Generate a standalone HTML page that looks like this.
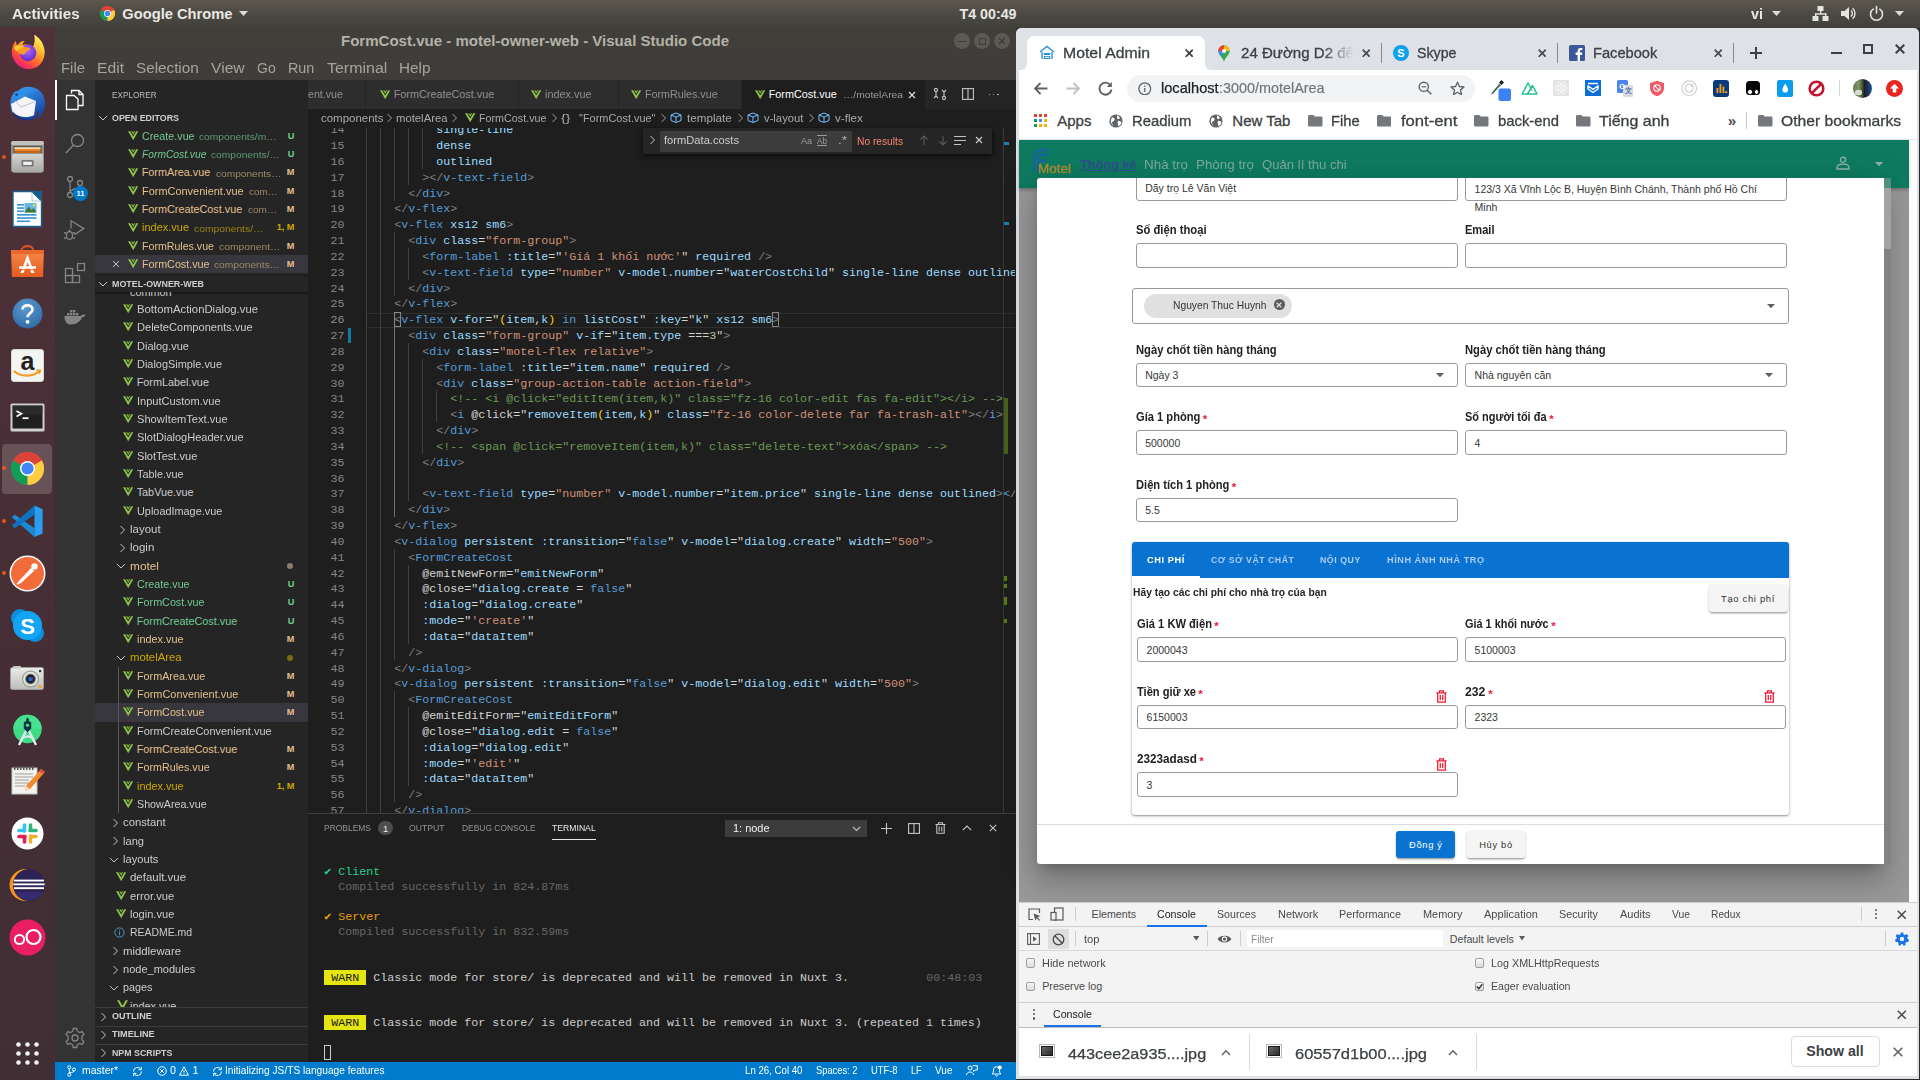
<!DOCTYPE html>
<html><head><meta charset="utf-8"><title>Desktop</title>
<style>
html,body{margin:0;padding:0;}
body{width:1920px;height:1080px;overflow:hidden;position:relative;background:#2c2b28;font-family:"Liberation Sans",sans-serif;}
div,span,svg{position:absolute;box-sizing:border-box;}
span{display:block;}
.clip{overflow:hidden;}
</style></head><body>
<div style="left:0px;top:0px;width:1920px;height:27.5px;background:linear-gradient(#5c584f,#4f4c45 40%,#403f3a 100%);"></div>
<span style="top:3.70px;height:21px;line-height:21px;font-size:14.7px;color:#e8e8e4;font-family:'Liberation Sans',sans-serif;white-space:pre;font-weight:700;left:12.30px;transform:scaleX(1.0366);transform-origin:left center;">Activities</span>
<svg style="left:100.0px;top:6.0px;" width="15.0" height="15.0" viewBox="0 0 15.0 15.0"><circle cx="7.5" cy="7.5" r="7.5" fill="#db4437"/>
<path d="M7.5,7.5 L1.00,3.75 A7.5,7.5 0 0,0 7.58,15.0 Z" fill="#0f9d58"/>
<path d="M7.5,7.5 L7.50,15.0 A7.5,7.5 0 0,0 14.00,3.75 Z" fill="#ffcd40"/>
<path d="M7.5,7.5 L14.00,3.75 A7.5,7.5 0 0,0 1.00,3.75 Z" fill="#db4437"/>
<circle cx="7.5" cy="7.5" r="3.45" fill="#fff"/>
<circle cx="7.5" cy="7.5" r="2.77" fill="#4285f4"/></svg>
<span style="top:3.70px;height:21px;line-height:21px;font-size:14.7px;color:#e8e8e4;font-family:'Liberation Sans',sans-serif;white-space:pre;font-weight:700;left:122.30px;">Google Chrome</span>
<svg style="left:239px;top:11px;" width="9" height="6" viewBox="0 0 9 6"><path d="M0,0 L9,0 L4.5,5 Z" fill="#dcdcd6"/></svg>
<span style="top:3.70px;height:21px;line-height:21px;font-size:14.7px;color:#e8e8e4;font-family:'Liberation Sans',sans-serif;white-space:pre;font-weight:700;left:987.50px;transform:translateX(-50%) scaleX(0.9694);">T4 00:49</span>
<span style="top:3.70px;height:21px;line-height:21px;font-size:14.7px;color:#e8e8e4;font-family:'Liberation Sans',sans-serif;white-space:pre;font-weight:700;left:1750.80px;transform:scaleX(0.9796);transform-origin:left center;">vi</span>
<svg style="left:1772px;top:11px;" width="9" height="6" viewBox="0 0 9 6"><path d="M0,0 L9,0 L4.5,5 Z" fill="#dcdcd6"/></svg>
<svg style="left:1812px;top:5px;" width="17" height="17" viewBox="0 0 17 17"><g fill="#e4e4de"><rect x="5.5" y="1" width="6" height="5"/><rect x="0.5" y="11" width="6" height="5"/><rect x="10.5" y="11" width="6" height="5"/><rect x="8" y="6" width="1.4" height="3"/><rect x="3" y="8.3" width="11.4" height="1.4"/><rect x="3" y="8.3" width="1.4" height="3"/><rect x="13" y="8.3" width="1.4" height="3"/></g></svg>
<svg style="left:1840px;top:5px;" width="17" height="17" viewBox="0 0 17 17"><g fill="#e4e4de"><path d="M1,6 H4.5 L9,2 V15 L4.5,11 H1 Z"/></g><g fill="none" stroke="#e4e4de" stroke-width="1.4"><path d="M11,5.5 A4,4 0 0,1 11,11.5"/><path d="M12.6,3.2 A7,7 0 0,1 12.6,13.8"/></g></svg>
<svg style="left:1868px;top:5px;" width="17" height="17" viewBox="0 0 17 17"><g fill="none" stroke="#e4e4de" stroke-width="1.6" stroke-linecap="round"><path d="M5.2,4.2 A6,6 0 1,0 11.8,4.2"/><path d="M8.5,1.5 V8"/></g></svg>
<svg style="left:1895px;top:11px;" width="9" height="6" viewBox="0 0 9 6"><path d="M0,0 L9,0 L4.5,5 Z" fill="#dcdcd6"/></svg>
<div style="left:0px;top:27px;width:55px;height:1053px;background:linear-gradient(#4f3139,#452e35 60%,#3f2f34);"></div>
<div style="left:2px;top:444px;width:50px;height:50px;background:rgba(255,255,255,0.17);border-radius:4px;"></div>
<div style="left:2px;top:155px;width:4px;height:4px;background:#e95420;border-radius:50%;"></div>
<div style="left:2px;top:466px;width:4px;height:4px;background:#e95420;border-radius:50%;"></div>
<div style="left:2px;top:519px;width:4px;height:4px;background:#e95420;border-radius:50%;"></div>
<div style="left:2px;top:571px;width:4px;height:4px;background:#e95420;border-radius:50%;"></div>
<svg style="left:9px;top:33px;" width="37" height="38" viewBox="0 0 37 38"><defs><linearGradient id="ff1" x1="0.8" y1="0.05" x2="0.2" y2="0.95"><stop offset="0" stop-color="#fff36b"/><stop offset="0.3" stop-color="#ffbd2e"/><stop offset="0.6" stop-color="#ff6a2a"/><stop offset="0.85" stop-color="#f9335a"/><stop offset="1" stop-color="#e3198c"/></linearGradient>
<radialGradient id="ff2" cx="0.45" cy="0.35" r="0.7"><stop offset="0" stop-color="#b06bff"/><stop offset="1" stop-color="#5b25c8"/></radialGradient></defs>
<path d="M25,1.5 C30,5 33,8 34.5,13 C36.5,18 36,24 33,29 C29,35.5 20,38 12.5,34.5 C4.5,30.5 1,21 3.5,13.5 C4.5,10.5 6,8.5 7,8 C7,10 7.5,11.5 8.5,12.5 C10,9 13,7.5 16,8 C14,9.5 13.5,11 14,12 C18,11 22,12 24,14 C25.5,10 26.5,6 25,1.5Z" fill="url(#ff1)"/>
<circle cx="19" cy="20" r="8.3" fill="url(#ff2)"/>
<path d="M5,14 C8,11.5 12,12 15,14 C18.5,14 21,15 21.5,16.5 C19,17 17,18.5 16,21 C13,22 9.5,21 8,18 C6.5,17.5 5.3,16 5,14Z" fill="#ff9b22"/>
<path d="M5,14 C8,11.5 12,12 15,14 C12,14.5 10,16 8,18 C6.5,17.5 5.3,16 5,14Z" fill="#ffc93a"/></svg>
<svg style="left:8px;top:85px;" width="39" height="39" viewBox="0 0 39 39"><defs><linearGradient id="tb1" x1="0.2" y1="0" x2="0.8" y2="1"><stop offset="0" stop-color="#3aa0f5"/><stop offset="1" stop-color="#123c9a"/></linearGradient></defs>
<path d="M10,6 C17,-1 30,1 35,10 C39,18 37,29 29,34 C31,30 31,27 30,25 L27,33 C22,37 12,36 6,30 C2,25 1,17 4,11 C5,8 7,6 10,6Z" fill="url(#tb1)"/>
<path d="M9,7 C14,2 22,2 27,6 C22,6 18,8 16,12 L9,15 C7,12 7,9 9,7Z" fill="#2f8fe8"/>
<path d="M6.5,9.5 L10,8.3 L9.2,11Z" fill="#0d2b6b"/>
<path d="M3,19 L17,11.5 L28,16 L26,30 C20,33.5 10,32.5 4.5,27 Z" fill="#f5f5f9"/>
<path d="M7,15.5 L13,22 L27,16.5" fill="none" stroke="#b9bccb" stroke-width="0.9"/>
<path d="M5,29 C9,35 20,37 27,33 C21,35 10,33 5,27Z" fill="#1b2f7a"/></svg>
<svg style="left:10px;top:140px;" width="35" height="34" viewBox="0 0 35 34"><defs><linearGradient id="fl1" x1="0" y1="0" x2="0" y2="1"><stop offset="0" stop-color="#d4d4d0"/><stop offset="1" stop-color="#a6a6a2"/></linearGradient></defs>
<rect x="1" y="1" width="33" height="31.5" rx="3" fill="#8f8f8b"/>
<rect x="1" y="1" width="33" height="4" rx="2" fill="#c2c2be"/>
<rect x="3.5" y="6" width="28" height="8" fill="#55524e"/>
<rect x="4.5" y="7.2" width="26" height="2" fill="#f4dcb4"/><rect x="4.5" y="9" width="26" height="2.4" fill="#f08226"/><rect x="4.5" y="11.4" width="26" height="1.6" fill="#c96414"/>
<rect x="2" y="13.5" width="31" height="19" rx="2" fill="url(#fl1)"/>
<rect x="11.5" y="20" width="12" height="6.5" rx="1.2" fill="#77777a"/><rect x="13.2" y="21.7" width="8.6" height="3.2" fill="#f2f2f0"/></svg>
<svg style="left:12px;top:190px;" width="31" height="38" viewBox="0 0 31 38"><path d="M1,1.5 H20 L29.5,11 V36.5 H1 Z" fill="#ffffff" stroke="#1c5f8f" stroke-width="1.4"/>
<path d="M20,1 H30 V11 Z" fill="#155d8e"/><path d="M20,1.5 V11 H29.5" fill="none" stroke="#8fb9d6" stroke-width="0.8"/>
<rect x="5" y="14" width="7" height="1.7" fill="#3a9ad9"/><rect x="5" y="17.2" width="7" height="1.7" fill="#3a9ad9"/><rect x="5" y="20.4" width="7" height="1.7" fill="#3a9ad9"/>
<rect x="12.5" y="13" width="12" height="9.5" fill="#6ab6e6"/><path d="M12.5,22.5 L16.5,16.5 L19.5,20 L21.5,18 L24.5,22.5Z" fill="#3c7a3a"/><circle cx="22" cy="15.3" r="1.2" fill="#f6d84a"/>
<rect x="5" y="24" width="19.5" height="1.7" fill="#3a9ad9"/><rect x="5" y="27.2" width="19.5" height="1.7" fill="#3a9ad9"/><rect x="5" y="30.4" width="13" height="1.7" fill="#3a9ad9"/></svg>
<svg style="left:10px;top:243px;" width="35" height="35" viewBox="0 0 35 35"><defs><linearGradient id="sw1" x1="0" y1="0" x2="0" y2="1"><stop offset="0" stop-color="#f58a4a"/><stop offset="1" stop-color="#e65c1e"/></linearGradient></defs>
<path d="M11.5,8 C11.5,1.5 23.5,1.5 23.5,8" fill="none" stroke="#d4541c" stroke-width="2.2"/>
<path d="M1,7 H34 L33,34 H2 Z" fill="url(#sw1)"/><path d="M1,7 H34 L33.8,11 H1.2 Z" fill="#e9692c"/>
<path d="M10.5,30 L17.5,11.5 L24.5,30 H21.3 L17.5,19 L13.7,30 Z" fill="#fff"/><rect x="9" y="23.3" width="17" height="2.4" fill="#fff"/><rect x="9" y="26.2" width="17" height="1" fill="#e9692c"/></svg>
<svg style="left:12px;top:298px;" width="31" height="31" viewBox="0 0 31 31"><defs><radialGradient id="hp" cx="0.45" cy="0.3" r="0.8"><stop offset="0" stop-color="#5b9ad2"/><stop offset="1" stop-color="#2c66a0"/></radialGradient></defs>
<circle cx="15.5" cy="15.5" r="15" fill="url(#hp)"/>
<path d="M10.5,11.5 C10.5,6 20.5,6 20.5,11.5 C20.5,15 15.6,15 15.6,19.2" fill="none" stroke="#fff" stroke-width="2.6"/><circle cx="15.6" cy="23.8" r="1.9" fill="#fff"/></svg>
<svg style="left:11px;top:349px;" width="33" height="33" viewBox="0 0 33 33"><rect x="0.5" y="0.5" width="32" height="32" rx="2.5" fill="#f4f4f2" stroke="#d6d6d2"/>
<text x="16.5" y="20.5" font-family="Liberation Sans" font-weight="700" font-size="25" fill="#222" text-anchor="middle">a</text>
<path d="M3.5,22.5 C11,28.5 22,27.5 28,22.5" fill="none" stroke="#f59a1c" stroke-width="2.2" stroke-linecap="round"/><path d="M25.5,21 L29.5,21.3 L28.3,25" fill="none" stroke="#f59a1c" stroke-width="1.4"/></svg>
<svg style="left:10px;top:403px;" width="35" height="29" viewBox="0 0 35 29"><rect x="0.5" y="0.5" width="34" height="28" rx="1.5" fill="#cfcfcb"/><rect x="2.5" y="2.5" width="30" height="23" fill="#1f1f1f"/><rect x="2.5" y="2.5" width="30" height="9" fill="#333" opacity="0.6"/>
<path d="M6.5,8 L11.5,10.8 L6.5,13.6" fill="none" stroke="#fff" stroke-width="1.7"/><rect x="12.5" y="14.3" width="6" height="1.8" fill="#fff"/></svg>
<svg style="left:10.5px;top:452.0px;" width="33.0" height="33.0" viewBox="0 0 33.0 33.0"><circle cx="16.5" cy="16.5" r="16.5" fill="#db4437"/>
<path d="M16.5,16.5 L2.21,8.25 A16.5,16.5 0 0,0 16.66,33.0 Z" fill="#0f9d58"/>
<path d="M16.5,16.5 L16.50,33.0 A16.5,16.5 0 0,0 30.79,8.25 Z" fill="#ffcd40"/>
<path d="M16.5,16.5 L30.79,8.25 A16.5,16.5 0 0,0 2.21,8.25 Z" fill="#db4437"/>
<circle cx="16.5" cy="16.5" r="7.59" fill="#fff"/>
<circle cx="16.5" cy="16.5" r="6.10" fill="#4285f4"/></svg>
<svg style="left:11px;top:504.5px;" width="33" height="33" viewBox="0 0 33 33"><path d="M23.5,32 L3.2,14.2 L0.8,12.2 L3.6,9.6 L23.5,23.2 Z" fill="#1b8ad6"/>
<path d="M23.5,0.5 L3.2,18.6 L0.8,20.6 L3.6,23.2 L23.5,9.4 Z" fill="#0d74c4"/>
<path d="M23.5,0.5 L31.6,4.2 V28.6 L23.5,32 Z" fill="#2a9df0"/></svg>
<svg style="left:9px;top:555px;" width="37" height="37" viewBox="0 0 37 37"><circle cx="18.5" cy="18.5" r="18" fill="#fff"/><circle cx="18.5" cy="18.5" r="16.5" fill="#f26b3a"/>
<path d="M9,27 L22,13 L25,16 L12,28 Z" fill="#fff"/><circle cx="25.5" cy="11.5" r="3.2" fill="#fff"/><path d="M8,29 L12,27" stroke="#fff" stroke-width="1.5"/></svg>
<svg style="left:10px;top:608px;" width="35" height="35" viewBox="0 0 35 35"><circle cx="10" cy="10" r="9" fill="#0a8fe0"/><circle cx="25" cy="25" r="9" fill="#0a8fe0"/><circle cx="17.5" cy="17.5" r="14.5" fill="#12a5f4"/>
<text x="17.5" y="25.5" font-family="Liberation Sans" font-weight="700" font-size="22" fill="#fff" text-anchor="middle">S</text></svg>
<svg style="left:10px;top:665px;" width="35" height="26" viewBox="0 0 35 26"><defs><linearGradient id="cm1" x1="0" y1="0" x2="0" y2="1"><stop offset="0" stop-color="#ebebe7"/><stop offset="1" stop-color="#bdbdb9"/></linearGradient></defs>
<rect x="0.5" y="2.5" width="33" height="22" rx="2" fill="url(#cm1)" stroke="#a3a39f" stroke-width="0.8"/>
<rect x="3" y="1" width="8" height="2.5" rx="1" fill="#c9c9c5"/><rect x="29" y="5" width="2.2" height="2.2" fill="#333"/>
<circle cx="20.5" cy="14" r="8.6" fill="#9d9d99"/><circle cx="20.5" cy="14" r="7.3" fill="#e9e9e5"/><circle cx="20.5" cy="14" r="5.6" fill="#8b8b87"/><circle cx="20.5" cy="14" r="4.4" fill="#1d1d22"/><rect x="18.3" y="12.3" width="4.6" height="3.6" rx="1" fill="#2a5bd0"/><rect x="28.6" y="20" width="2.8" height="2.8" fill="#f0a21c"/></svg>
<svg style="left:12px;top:714px;" width="31" height="33" viewBox="0 0 31 33"><circle cx="15.5" cy="15" r="14.2" fill="#3ddc84"/><path d="M1.3,15 A14.2,14.2 0 0,1 29.7,15 Z" fill="#46e08e"/>
<path d="M15.5,14 L7,31 M15.5,14 L24,31 M9.5,25 C13,21.5 18,21.5 21.5,25" fill="none" stroke="#dfeaf2" stroke-width="2.4"/>
<path d="M15.5,3.5 L16.8,5 V7 L19.2,8.5 V14.5 L15.5,18.5 L11.8,14.5 V8.5 L14.2,7 V5 Z" fill="#0b3246"/><circle cx="15.5" cy="11.3" r="1.7" fill="#3ddc84"/></svg>
<svg style="left:11px;top:765px;" width="35" height="31" viewBox="0 0 35 31"><rect x="1" y="3" width="25" height="26" fill="#f2f2ee" stroke="#c4c4c0"/>
<g stroke="#8a8a86" stroke-width="0.8"><path d="M4,9H22M4,12H22M4,15H18M4,18H22M4,21H14"/></g>
<g fill="#555"><rect x="3" y="1" width="1.5" height="4"/><rect x="6" y="1" width="1.5" height="4"/><rect x="9" y="1" width="1.5" height="4"/><rect x="12" y="1" width="1.5" height="4"/><rect x="15" y="1" width="1.5" height="4"/><rect x="18" y="1" width="1.5" height="4"/><rect x="21" y="1" width="1.5" height="4"/></g>
<path d="M15,21 L30,4 L34,7 L19,24 L14,26 Z" fill="#f08a2c"/><path d="M30,4 L34,7 L32,9 L28,6Z" fill="#e04848"/><path d="M15,21 L19,24 L14,26Z" fill="#f6dcb0"/></svg>
<svg style="left:11px;top:817px;" width="33" height="33" viewBox="0 0 33 33"><circle cx="16.5" cy="16.5" r="16" fill="#fff"/>
<g stroke-width="3.6" stroke-linecap="round"><path d="M13.5,8 V14" stroke="#36c5f0"/><path d="M8,13.5 H13" stroke="#36c5f0"/>
<path d="M25,13.5 H19" stroke="#2eb67d"/><path d="M19.5,8 V13" stroke="#2eb67d"/>
<path d="M19.5,25 V19" stroke="#ecb22e"/><path d="M25,19.5 H20" stroke="#ecb22e"/>
<path d="M8,19.5 H14" stroke="#e01e5a"/><path d="M13.5,25 V20" stroke="#e01e5a"/></g></svg>
<svg style="left:8.5px;top:868px;" width="37" height="34" viewBox="0 0 37 34"><circle cx="16.5" cy="17" r="16" fill="#f7941e"/><circle cx="20" cy="17" r="16" fill="#2c2255"/><path d="M6,24 A16,16 0 0,0 34,24 Z" fill="#3a2f7a" opacity="0.7"/>
<rect x="5" y="11.6" width="30" height="1.9" fill="#fff"/><rect x="4.3" y="15.4" width="31.4" height="1.9" fill="#fff"/><rect x="5" y="19.2" width="30" height="1.9" fill="#fff"/></svg>
<svg style="left:9px;top:919px;" width="37" height="37" viewBox="0 0 37 37"><circle cx="18.5" cy="18.5" r="18" fill="#e91e63"/>
<circle cx="10.5" cy="20.5" r="4.6" fill="none" stroke="#fff" stroke-width="2"/><circle cx="24.5" cy="18" r="7" fill="none" stroke="#fff" stroke-width="2.2"/></svg>
<svg style="left:15.5px;top:1041.5px;" width="23" height="23" viewBox="0 0 23 23"><circle cx="2.5" cy="2.5" r="2.3" fill="#f2f2f0"/><circle cx="11.5" cy="2.5" r="2.3" fill="#f2f2f0"/><circle cx="20.5" cy="2.5" r="2.3" fill="#f2f2f0"/><circle cx="2.5" cy="11.5" r="2.3" fill="#f2f2f0"/><circle cx="11.5" cy="11.5" r="2.3" fill="#f2f2f0"/><circle cx="20.5" cy="11.5" r="2.3" fill="#f2f2f0"/><circle cx="2.5" cy="20.5" r="2.3" fill="#f2f2f0"/><circle cx="11.5" cy="20.5" r="2.3" fill="#f2f2f0"/><circle cx="20.5" cy="20.5" r="2.3" fill="#f2f2f0"/></svg>
<div style="left:55px;top:27px;width:960.5px;height:53px;background:linear-gradient(#403f3a,#3e3d39);"></div>
<span style="top:30.50px;height:21px;line-height:21px;font-size:14.7px;color:#b4b2a8;font-family:'Liberation Sans',sans-serif;white-space:pre;font-weight:700;left:534.50px;transform:translateX(-50%) scaleX(1.0232);">FormCost.vue - motel-owner-web - Visual Studio Code</span>
<div style="left:954px;top:33px;width:16px;height:16px;background:#5a5954;border-radius:50%;"></div>
<div style="left:958px;top:40.5px;width:8px;height:1.2px;background:#3c3b37;"></div>
<div style="left:974px;top:33px;width:16px;height:16px;background:#5a5954;border-radius:50%;"></div>
<div style="left:978.5px;top:37.5px;width:7px;height:7px;border:1.2px solid #3c3b37;"></div>
<div style="left:994px;top:33px;width:16px;height:16px;background:#5a5954;border-radius:50%;"></div>
<svg style="left:998px;top:37px;" width="8" height="8" viewBox="0 0 8 8"><path d="M1,1 L7,7 M7,1 L1,7" stroke="#3c3b37" stroke-width="1.3"/></svg>
<span style="top:57.50px;height:21px;line-height:21px;font-size:14.7px;color:#a5a49c;font-family:'Liberation Sans',sans-serif;white-space:pre;left:61.00px;transform:scaleX(1.0139);transform-origin:left center;">File</span>
<span style="top:57.50px;height:21px;line-height:21px;font-size:14.7px;color:#a5a49c;font-family:'Liberation Sans',sans-serif;white-space:pre;left:97.00px;transform:scaleX(1.0667);transform-origin:left center;">Edit</span>
<span style="top:57.50px;height:21px;line-height:21px;font-size:14.7px;color:#a5a49c;font-family:'Liberation Sans',sans-serif;white-space:pre;left:136.00px;transform:scaleX(1.0377);transform-origin:left center;">Selection</span>
<span style="top:57.50px;height:21px;line-height:21px;font-size:14.7px;color:#a5a49c;font-family:'Liberation Sans',sans-serif;white-space:pre;left:211.00px;transform:scaleX(1.0672);transform-origin:left center;">View</span>
<span style="top:57.50px;height:21px;line-height:21px;font-size:14.7px;color:#a5a49c;font-family:'Liberation Sans',sans-serif;white-space:pre;left:257.00px;transform:scaleX(0.9544);transform-origin:left center;">Go</span>
<span style="top:57.50px;height:21px;line-height:21px;font-size:14.7px;color:#a5a49c;font-family:'Liberation Sans',sans-serif;white-space:pre;left:288.00px;transform:scaleX(0.9758);transform-origin:left center;">Run</span>
<span style="top:57.50px;height:21px;line-height:21px;font-size:14.7px;color:#a5a49c;font-family:'Liberation Sans',sans-serif;white-space:pre;left:327.00px;transform:scaleX(1.0865);transform-origin:left center;">Terminal</span>
<span style="top:57.50px;height:21px;line-height:21px;font-size:14.7px;color:#a5a49c;font-family:'Liberation Sans',sans-serif;white-space:pre;left:399.30px;transform:scaleX(1.0391);transform-origin:left center;">Help</span>
<div style="left:55px;top:80px;width:40px;height:982px;background:#333333;"></div>
<div style="left:55px;top:80px;width:1.7px;height:40px;background:#ffffff;"></div>
<svg style="left:65px;top:89px;" width="20" height="22" viewBox="0 0 20 22"><g fill="none" stroke="#fff" stroke-width="1.3"><path d="M6.5,4.5 V1.5 H14 L18,5.5 V16.5 H13"/><path d="M14,1.5 V5.5 H18"/><path d="M1.5,6.5 H9 L13,10 V20.5 H1.5 Z"/></g></svg>
<svg style="left:64px;top:132px;" width="22" height="22" viewBox="0 0 22 22"><g fill="none" stroke="#858585" stroke-width="1.3"><circle cx="13.5" cy="8.5" r="6"/><path d="M9.5,13 L2,21"/></g></svg>
<svg style="left:65px;top:175px;" width="22" height="24" viewBox="0 0 22 24"><g fill="none" stroke="#858585" stroke-width="1.3"><circle cx="5" cy="4" r="2.5"/><circle cx="5" cy="20" r="2.5"/><circle cx="15" cy="8" r="2.5"/><path d="M5,6.5 V17.5"/><path d="M15,10.5 C15,15 5,13 5,17.5"/></g></svg>
<div style="left:73px;top:185.8px;width:15px;height:15px;background:#007acc;border-radius:50%;"></div>
<span style="top:188.00px;height:11px;line-height:11px;font-size:7.7px;color:#fff;font-family:'Liberation Sans',sans-serif;white-space:pre;font-weight:700;left:80.50px;transform:translateX(-50%);">11</span>
<svg style="left:63px;top:218px;" width="24" height="24" viewBox="0 0 24 24"><g fill="none" stroke="#858585" stroke-width="1.3"><path d="M8,10.5 V2.8 L20.8,10.6 L11.5,16.6"/><ellipse cx="6.5" cy="17.5" rx="3" ry="4"/><path d="M1,15H3.5M1,20H3.5M9.5,15H12M9.5,20H12M6.5,13.5V11.5"/></g></svg>
<svg style="left:64px;top:262px;" width="22" height="22" viewBox="0 0 22 22"><g fill="none" stroke="#858585" stroke-width="1.3"><rect x="1.5" y="6.5" width="7" height="7"/><rect x="1.5" y="13.5" width="7" height="7"/><rect x="8.5" y="13.5" width="7" height="7"/><rect x="13.5" y="1.5" width="7" height="7"/></g></svg>
<svg style="left:64px;top:309px;" width="22" height="16" viewBox="0 0 22 16"><g fill="#858585"><path d="M0.5,7 H17 C17.5,5.5 19,5 21.5,5.8 C21,7.5 19.5,8.3 18,8.3 C16.5,13 12,15.5 7,15.5 C3,15.5 0.5,13 0.5,7Z"/><rect x="3" y="4" width="2.4" height="2.4"/><rect x="6" y="4" width="2.4" height="2.4"/><rect x="9" y="4" width="2.4" height="2.4"/><rect x="6" y="1" width="2.4" height="2.4"/><rect x="9" y="1" width="2.4" height="2.4"/><rect x="12" y="4" width="2.4" height="2.4"/></g></svg>
<svg style="left:64px;top:1027px;" width="22" height="22" viewBox="0 0 22 22"><g fill="none" stroke="#858585" stroke-width="1.3"><circle cx="11" cy="11" r="3"/><path d="M9.3,1.5 H12.7 L13.3,4.2 L15.6,5.5 L18.2,4.6 L19.9,7.5 L17.9,9.4 V12.6 L19.9,14.5 L18.2,17.4 L15.6,16.5 L13.3,17.8 L12.7,20.5 H9.3 L8.7,17.8 L6.4,16.5 L3.8,17.4 L2.1,14.5 L4.1,12.6 V9.4 L2.1,7.5 L3.8,4.6 L6.4,5.5 L8.7,4.2 Z"/></g></svg>
<div style="left:95px;top:80px;width:213px;height:982px;background:#252526;"></div>
<span style="top:88.50px;height:13px;line-height:13px;font-size:9.2px;color:#bbbbbb;font-family:'Liberation Sans',sans-serif;white-space:pre;left:111.70px;transform:scaleX(0.8912);transform-origin:left center;">EXPLORER</span>
<svg style="left:98px;top:112.7px;" width="10" height="10" viewBox="0 0 10 10"><path d="M1,3 L5,7 L9,3" fill="none" stroke="#c5c5c5" stroke-width="1"/></svg>
<span style="top:112.10px;height:13px;line-height:13px;font-size:9.2px;color:#cfcfcf;font-family:'Liberation Sans',sans-serif;white-space:pre;font-weight:700;left:111.70px;transform:scaleX(0.9673);transform-origin:left center;">OPEN EDITORS</span>
<svg style="left:127.5px;top:130.92px;" width="10.4" height="9.36" viewBox="0 0 12 10.4"><path d="M0,0 H2.6 L6,5.9 L9.4,0 H12 L6,10.4 Z" fill="#8dc149"/><path d="M3.6,0 H5 L6,1.8 L7,0 H8.4 L6,4.3Z" fill="#8dc149"/><path d="M2.6,0 H3.6 L6,4.3 L8.4,0 H9.4 L6,5.9Z" fill="#1e1e1e" opacity="0.55"/></svg>
<span style="top:128.50px;height:15px;line-height:15px;font-size:10.83px;color:#73c991;font-family:'Liberation Sans',sans-serif;white-space:pre;left:141.70px;transform:scaleX(0.9930);transform-origin:left center;">Create.vue</span>
<span style="top:130.10px;height:13px;line-height:13px;font-size:9.6px;color:#5d9a72;font-family:'Liberation Sans',sans-serif;white-space:pre;left:199.30px;transform:scaleX(1.0674);transform-origin:left center;">components/m…</span>
<span style="top:129.50px;height:13px;line-height:13px;font-size:9.2px;color:#73c991;font-family:'Liberation Sans',sans-serif;white-space:pre;font-weight:700;right:1625.50px;">U</span>
<svg style="left:127.5px;top:149.25px;" width="10.4" height="9.36" viewBox="0 0 12 10.4"><path d="M0,0 H2.6 L6,5.9 L9.4,0 H12 L6,10.4 Z" fill="#8dc149"/><path d="M3.6,0 H5 L6,1.8 L7,0 H8.4 L6,4.3Z" fill="#8dc149"/><path d="M2.6,0 H3.6 L6,4.3 L8.4,0 H9.4 L6,5.9Z" fill="#1e1e1e" opacity="0.55"/></svg>
<span style="top:146.83px;height:15px;line-height:15px;font-size:10.83px;color:#73c991;font-family:'Liberation Sans',sans-serif;white-space:pre;font-style:italic;left:141.70px;transform:scaleX(0.9471);transform-origin:left center;">FormCost.vue</span>
<span style="top:148.43px;height:13px;line-height:13px;font-size:9.6px;color:#5d9a72;font-family:'Liberation Sans',sans-serif;white-space:pre;left:211.30px;transform:scaleX(1.0646);transform-origin:left center;">components/…</span>
<span style="top:147.83px;height:13px;line-height:13px;font-size:9.2px;color:#73c991;font-family:'Liberation Sans',sans-serif;white-space:pre;font-weight:700;right:1625.50px;">U</span>
<svg style="left:127.5px;top:167.59px;" width="10.4" height="9.36" viewBox="0 0 12 10.4"><path d="M0,0 H2.6 L6,5.9 L9.4,0 H12 L6,10.4 Z" fill="#8dc149"/><path d="M3.6,0 H5 L6,1.8 L7,0 H8.4 L6,4.3Z" fill="#8dc149"/><path d="M2.6,0 H3.6 L6,4.3 L8.4,0 H9.4 L6,5.9Z" fill="#1e1e1e" opacity="0.55"/></svg>
<span style="top:165.17px;height:15px;line-height:15px;font-size:10.83px;color:#e2c08d;font-family:'Liberation Sans',sans-serif;white-space:pre;left:141.70px;">FormArea.vue</span>
<span style="top:166.77px;height:13px;line-height:13px;font-size:9.6px;color:#9c8a68;font-family:'Liberation Sans',sans-serif;white-space:pre;left:215.70px;transform:scaleX(1.0556);transform-origin:left center;">components…</span>
<span style="top:166.17px;height:13px;line-height:13px;font-size:9.2px;color:#e2c08d;font-family:'Liberation Sans',sans-serif;white-space:pre;font-weight:700;right:1625.50px;">M</span>
<svg style="left:127.5px;top:185.92px;" width="10.4" height="9.36" viewBox="0 0 12 10.4"><path d="M0,0 H2.6 L6,5.9 L9.4,0 H12 L6,10.4 Z" fill="#8dc149"/><path d="M3.6,0 H5 L6,1.8 L7,0 H8.4 L6,4.3Z" fill="#8dc149"/><path d="M2.6,0 H3.6 L6,4.3 L8.4,0 H9.4 L6,5.9Z" fill="#1e1e1e" opacity="0.55"/></svg>
<span style="top:183.50px;height:15px;line-height:15px;font-size:10.83px;color:#e2c08d;font-family:'Liberation Sans',sans-serif;white-space:pre;left:141.70px;transform:scaleX(1.0108);transform-origin:left center;">FormConvenient.vue</span>
<span style="top:185.10px;height:13px;line-height:13px;font-size:9.6px;color:#9c8a68;font-family:'Liberation Sans',sans-serif;white-space:pre;left:248.70px;transform:scaleX(1.0318);transform-origin:left center;">com…</span>
<span style="top:184.50px;height:13px;line-height:13px;font-size:9.2px;color:#e2c08d;font-family:'Liberation Sans',sans-serif;white-space:pre;font-weight:700;right:1625.50px;">M</span>
<svg style="left:127.5px;top:204.25px;" width="10.4" height="9.36" viewBox="0 0 12 10.4"><path d="M0,0 H2.6 L6,5.9 L9.4,0 H12 L6,10.4 Z" fill="#8dc149"/><path d="M3.6,0 H5 L6,1.8 L7,0 H8.4 L6,4.3Z" fill="#8dc149"/><path d="M2.6,0 H3.6 L6,4.3 L8.4,0 H9.4 L6,5.9Z" fill="#1e1e1e" opacity="0.55"/></svg>
<span style="top:201.83px;height:15px;line-height:15px;font-size:10.83px;color:#e2c08d;font-family:'Liberation Sans',sans-serif;white-space:pre;left:141.70px;">FormCreateCost.vue</span>
<span style="top:203.43px;height:13px;line-height:13px;font-size:9.6px;color:#9c8a68;font-family:'Liberation Sans',sans-serif;white-space:pre;left:247.70px;transform:scaleX(1.0462);transform-origin:left center;">com…</span>
<span style="top:202.83px;height:13px;line-height:13px;font-size:9.2px;color:#e2c08d;font-family:'Liberation Sans',sans-serif;white-space:pre;font-weight:700;right:1625.50px;">M</span>
<svg style="left:127.5px;top:222.58px;" width="10.4" height="9.36" viewBox="0 0 12 10.4"><path d="M0,0 H2.6 L6,5.9 L9.4,0 H12 L6,10.4 Z" fill="#8dc149"/><path d="M3.6,0 H5 L6,1.8 L7,0 H8.4 L6,4.3Z" fill="#8dc149"/><path d="M2.6,0 H3.6 L6,4.3 L8.4,0 H9.4 L6,5.9Z" fill="#1e1e1e" opacity="0.55"/></svg>
<span style="top:220.16px;height:15px;line-height:15px;font-size:10.83px;color:#cca700;font-family:'Liberation Sans',sans-serif;white-space:pre;left:141.70px;transform:scaleX(1.0138);transform-origin:left center;">index.vue</span>
<span style="top:221.76px;height:13px;line-height:13px;font-size:9.6px;color:#9a8314;font-family:'Liberation Sans',sans-serif;white-space:pre;left:193.70px;transform:scaleX(1.0739);transform-origin:left center;">components/…</span>
<span style="top:221.16px;height:13px;line-height:13px;font-size:9.2px;color:#cca700;font-family:'Liberation Sans',sans-serif;white-space:pre;font-weight:700;right:1625.50px;">1, M</span>
<svg style="left:127.5px;top:240.92px;" width="10.4" height="9.36" viewBox="0 0 12 10.4"><path d="M0,0 H2.6 L6,5.9 L9.4,0 H12 L6,10.4 Z" fill="#8dc149"/><path d="M3.6,0 H5 L6,1.8 L7,0 H8.4 L6,4.3Z" fill="#8dc149"/><path d="M2.6,0 H3.6 L6,4.3 L8.4,0 H9.4 L6,5.9Z" fill="#1e1e1e" opacity="0.55"/></svg>
<span style="top:238.50px;height:15px;line-height:15px;font-size:10.83px;color:#e2c08d;font-family:'Liberation Sans',sans-serif;white-space:pre;left:141.70px;transform:scaleX(0.9806);transform-origin:left center;">FormRules.vue</span>
<span style="top:240.10px;height:13px;line-height:13px;font-size:9.6px;color:#9c8a68;font-family:'Liberation Sans',sans-serif;white-space:pre;left:219.00px;transform:scaleX(1.0743);transform-origin:left center;">component…</span>
<span style="top:239.50px;height:13px;line-height:13px;font-size:9.2px;color:#e2c08d;font-family:'Liberation Sans',sans-serif;white-space:pre;font-weight:700;right:1625.50px;">M</span>
<div style="left:95px;top:255.16450000000003px;width:213px;height:18.333px;background:#37373d;"></div>
<svg style="left:112px;top:260.331px;" width="8" height="8" viewBox="0 0 8 8"><path d="M1,1 L7,7 M7,1 L1,7" stroke="#c5c5c5" stroke-width="1"/></svg>
<svg style="left:127.5px;top:259.25px;" width="10.4" height="9.36" viewBox="0 0 12 10.4"><path d="M0,0 H2.6 L6,5.9 L9.4,0 H12 L6,10.4 Z" fill="#8dc149"/><path d="M3.6,0 H5 L6,1.8 L7,0 H8.4 L6,4.3Z" fill="#8dc149"/><path d="M2.6,0 H3.6 L6,4.3 L8.4,0 H9.4 L6,5.9Z" fill="#1e1e1e" opacity="0.55"/></svg>
<span style="top:256.83px;height:15px;line-height:15px;font-size:10.83px;color:#e2c08d;font-family:'Liberation Sans',sans-serif;white-space:pre;left:141.70px;transform:scaleX(0.9941);transform-origin:left center;">FormCost.vue</span>
<span style="top:258.43px;height:13px;line-height:13px;font-size:9.6px;color:#9c8a68;font-family:'Liberation Sans',sans-serif;white-space:pre;left:214.30px;transform:scaleX(1.0669);transform-origin:left center;">components…</span>
<span style="top:257.83px;height:13px;line-height:13px;font-size:9.2px;color:#e2c08d;font-family:'Liberation Sans',sans-serif;white-space:pre;font-weight:700;right:1625.50px;">M</span>
<div style="left:95px;top:275px;width:213px;height:1px;background:#1b1b1c;"></div>
<svg style="left:98px;top:278.7px;" width="10" height="10" viewBox="0 0 10 10"><path d="M1,3 L5,7 L9,3" fill="none" stroke="#c5c5c5" stroke-width="1"/></svg>
<span style="top:278.10px;height:13px;line-height:13px;font-size:9.2px;color:#cfcfcf;font-family:'Liberation Sans',sans-serif;white-space:pre;font-weight:700;left:111.70px;transform:scaleX(0.9692);transform-origin:left center;">MOTEL-OWNER-WEB</span>
<div style="left:95px;top:292px;width:213px;height:3px;background:linear-gradient(rgba(0,0,0,0.45),rgba(0,0,0,0));"></div>
<div style="left:95px;top:292px;width:213px;height:6px;overflow:hidden;"><span style="left:35px;top:-7px;font-size:10.83px;color:#cccccc;line-height:14px;">common</span></div>
<svg style="left:122.5px;top:303.97px;" width="10.4" height="9.36" viewBox="0 0 12 10.4"><path d="M0,0 H2.6 L6,5.9 L9.4,0 H12 L6,10.4 Z" fill="#8dc149"/><path d="M3.6,0 H5 L6,1.8 L7,0 H8.4 L6,4.3Z" fill="#8dc149"/><path d="M2.6,0 H3.6 L6,4.3 L8.4,0 H9.4 L6,5.9Z" fill="#1e1e1e" opacity="0.55"/></svg>
<span style="top:302.05px;height:15px;line-height:15px;font-size:10.83px;color:#cccccc;font-family:'Liberation Sans',sans-serif;white-space:pre;left:136.70px;transform:scaleX(1.0471);transform-origin:left center;">BottomActionDialog.vue</span>
<svg style="left:122.5px;top:322.3px;" width="10.4" height="9.36" viewBox="0 0 12 10.4"><path d="M0,0 H2.6 L6,5.9 L9.4,0 H12 L6,10.4 Z" fill="#8dc149"/><path d="M3.6,0 H5 L6,1.8 L7,0 H8.4 L6,4.3Z" fill="#8dc149"/><path d="M2.6,0 H3.6 L6,4.3 L8.4,0 H9.4 L6,5.9Z" fill="#1e1e1e" opacity="0.55"/></svg>
<span style="top:320.38px;height:15px;line-height:15px;font-size:10.83px;color:#cccccc;font-family:'Liberation Sans',sans-serif;white-space:pre;left:136.70px;transform:scaleX(1.0223);transform-origin:left center;">DeleteComponents.vue</span>
<svg style="left:122.5px;top:340.64px;" width="10.4" height="9.36" viewBox="0 0 12 10.4"><path d="M0,0 H2.6 L6,5.9 L9.4,0 H12 L6,10.4 Z" fill="#8dc149"/><path d="M3.6,0 H5 L6,1.8 L7,0 H8.4 L6,4.3Z" fill="#8dc149"/><path d="M2.6,0 H3.6 L6,4.3 L8.4,0 H9.4 L6,5.9Z" fill="#1e1e1e" opacity="0.55"/></svg>
<span style="top:338.72px;height:15px;line-height:15px;font-size:10.83px;color:#cccccc;font-family:'Liberation Sans',sans-serif;white-space:pre;left:136.70px;transform:scaleX(1.0162);transform-origin:left center;">Dialog.vue</span>
<svg style="left:122.5px;top:358.97px;" width="10.4" height="9.36" viewBox="0 0 12 10.4"><path d="M0,0 H2.6 L6,5.9 L9.4,0 H12 L6,10.4 Z" fill="#8dc149"/><path d="M3.6,0 H5 L6,1.8 L7,0 H8.4 L6,4.3Z" fill="#8dc149"/><path d="M2.6,0 H3.6 L6,4.3 L8.4,0 H9.4 L6,5.9Z" fill="#1e1e1e" opacity="0.55"/></svg>
<span style="top:357.05px;height:15px;line-height:15px;font-size:10.83px;color:#cccccc;font-family:'Liberation Sans',sans-serif;white-space:pre;left:136.70px;transform:scaleX(1.0087);transform-origin:left center;">DialogSimple.vue</span>
<svg style="left:122.5px;top:377.3px;" width="10.4" height="9.36" viewBox="0 0 12 10.4"><path d="M0,0 H2.6 L6,5.9 L9.4,0 H12 L6,10.4 Z" fill="#8dc149"/><path d="M3.6,0 H5 L6,1.8 L7,0 H8.4 L6,4.3Z" fill="#8dc149"/><path d="M2.6,0 H3.6 L6,4.3 L8.4,0 H9.4 L6,5.9Z" fill="#1e1e1e" opacity="0.55"/></svg>
<span style="top:375.38px;height:15px;line-height:15px;font-size:10.83px;color:#cccccc;font-family:'Liberation Sans',sans-serif;white-space:pre;left:136.70px;">FormLabel.vue</span>
<svg style="left:122.5px;top:395.64px;" width="10.4" height="9.36" viewBox="0 0 12 10.4"><path d="M0,0 H2.6 L6,5.9 L9.4,0 H12 L6,10.4 Z" fill="#8dc149"/><path d="M3.6,0 H5 L6,1.8 L7,0 H8.4 L6,4.3Z" fill="#8dc149"/><path d="M2.6,0 H3.6 L6,4.3 L8.4,0 H9.4 L6,5.9Z" fill="#1e1e1e" opacity="0.55"/></svg>
<span style="top:393.72px;height:15px;line-height:15px;font-size:10.83px;color:#cccccc;font-family:'Liberation Sans',sans-serif;white-space:pre;left:136.70px;transform:scaleX(1.0213);transform-origin:left center;">InputCustom.vue</span>
<svg style="left:122.5px;top:413.97px;" width="10.4" height="9.36" viewBox="0 0 12 10.4"><path d="M0,0 H2.6 L6,5.9 L9.4,0 H12 L6,10.4 Z" fill="#8dc149"/><path d="M3.6,0 H5 L6,1.8 L7,0 H8.4 L6,4.3Z" fill="#8dc149"/><path d="M2.6,0 H3.6 L6,4.3 L8.4,0 H9.4 L6,5.9Z" fill="#1e1e1e" opacity="0.55"/></svg>
<span style="top:412.05px;height:15px;line-height:15px;font-size:10.83px;color:#cccccc;font-family:'Liberation Sans',sans-serif;white-space:pre;left:136.70px;transform:scaleX(1.0239);transform-origin:left center;">ShowItemText.vue</span>
<svg style="left:122.5px;top:432.3px;" width="10.4" height="9.36" viewBox="0 0 12 10.4"><path d="M0,0 H2.6 L6,5.9 L9.4,0 H12 L6,10.4 Z" fill="#8dc149"/><path d="M3.6,0 H5 L6,1.8 L7,0 H8.4 L6,4.3Z" fill="#8dc149"/><path d="M2.6,0 H3.6 L6,4.3 L8.4,0 H9.4 L6,5.9Z" fill="#1e1e1e" opacity="0.55"/></svg>
<span style="top:430.38px;height:15px;line-height:15px;font-size:10.83px;color:#cccccc;font-family:'Liberation Sans',sans-serif;white-space:pre;left:136.70px;transform:scaleX(1.0177);transform-origin:left center;">SlotDialogHeader.vue</span>
<svg style="left:122.5px;top:450.63px;" width="10.4" height="9.36" viewBox="0 0 12 10.4"><path d="M0,0 H2.6 L6,5.9 L9.4,0 H12 L6,10.4 Z" fill="#8dc149"/><path d="M3.6,0 H5 L6,1.8 L7,0 H8.4 L6,4.3Z" fill="#8dc149"/><path d="M2.6,0 H3.6 L6,4.3 L8.4,0 H9.4 L6,5.9Z" fill="#1e1e1e" opacity="0.55"/></svg>
<span style="top:448.71px;height:15px;line-height:15px;font-size:10.83px;color:#cccccc;font-family:'Liberation Sans',sans-serif;white-space:pre;left:136.70px;transform:scaleX(1.0240);transform-origin:left center;">SlotTest.vue</span>
<svg style="left:122.5px;top:468.97px;" width="10.4" height="9.36" viewBox="0 0 12 10.4"><path d="M0,0 H2.6 L6,5.9 L9.4,0 H12 L6,10.4 Z" fill="#8dc149"/><path d="M3.6,0 H5 L6,1.8 L7,0 H8.4 L6,4.3Z" fill="#8dc149"/><path d="M2.6,0 H3.6 L6,4.3 L8.4,0 H9.4 L6,5.9Z" fill="#1e1e1e" opacity="0.55"/></svg>
<span style="top:467.05px;height:15px;line-height:15px;font-size:10.83px;color:#cccccc;font-family:'Liberation Sans',sans-serif;white-space:pre;left:136.70px;transform:scaleX(1.0052);transform-origin:left center;">Table.vue</span>
<svg style="left:122.5px;top:487.3px;" width="10.4" height="9.36" viewBox="0 0 12 10.4"><path d="M0,0 H2.6 L6,5.9 L9.4,0 H12 L6,10.4 Z" fill="#8dc149"/><path d="M3.6,0 H5 L6,1.8 L7,0 H8.4 L6,4.3Z" fill="#8dc149"/><path d="M2.6,0 H3.6 L6,4.3 L8.4,0 H9.4 L6,5.9Z" fill="#1e1e1e" opacity="0.55"/></svg>
<span style="top:485.38px;height:15px;line-height:15px;font-size:10.83px;color:#cccccc;font-family:'Liberation Sans',sans-serif;white-space:pre;left:136.70px;">TabVue.vue</span>
<svg style="left:122.5px;top:505.63px;" width="10.4" height="9.36" viewBox="0 0 12 10.4"><path d="M0,0 H2.6 L6,5.9 L9.4,0 H12 L6,10.4 Z" fill="#8dc149"/><path d="M3.6,0 H5 L6,1.8 L7,0 H8.4 L6,4.3Z" fill="#8dc149"/><path d="M2.6,0 H3.6 L6,4.3 L8.4,0 H9.4 L6,5.9Z" fill="#1e1e1e" opacity="0.55"/></svg>
<span style="top:503.71px;height:15px;line-height:15px;font-size:10.83px;color:#cccccc;font-family:'Liberation Sans',sans-serif;white-space:pre;left:136.70px;transform:scaleX(1.0048);transform-origin:left center;">UploadImage.vue</span>
<svg style="left:116.5px;top:524.546px;" width="10" height="10" viewBox="0 0 10 10"><path d="M3.5,1 L7.5,5 L3.5,9" fill="none" stroke="#c5c5c5" stroke-width="1"/></svg>
<span style="top:522.05px;height:15px;line-height:15px;font-size:10.83px;color:#cccccc;font-family:'Liberation Sans',sans-serif;white-space:pre;left:130.00px;transform:scaleX(1.0586);transform-origin:left center;">layout</span>
<svg style="left:116.5px;top:542.879px;" width="10" height="10" viewBox="0 0 10 10"><path d="M3.5,1 L7.5,5 L3.5,9" fill="none" stroke="#c5c5c5" stroke-width="1"/></svg>
<span style="top:540.38px;height:15px;line-height:15px;font-size:10.83px;color:#cccccc;font-family:'Liberation Sans',sans-serif;white-space:pre;left:130.00px;transform:scaleX(1.0616);transform-origin:left center;">login</span>
<svg style="left:116.0px;top:561.212px;" width="10" height="10" viewBox="0 0 10 10"><path d="M1,3 L5,7 L9,3" fill="none" stroke="#c5c5c5" stroke-width="1"/></svg>
<span style="top:558.71px;height:15px;line-height:15px;font-size:10.83px;color:#e2c08d;font-family:'Liberation Sans',sans-serif;white-space:pre;left:130.00px;transform:scaleX(1.0950);transform-origin:left center;">motel</span>
<div style="left:287px;top:563.212px;width:6px;height:6px;background:#8b7d6b;border-radius:50%;"></div>
<svg style="left:122.5px;top:578.97px;" width="10.4" height="9.36" viewBox="0 0 12 10.4"><path d="M0,0 H2.6 L6,5.9 L9.4,0 H12 L6,10.4 Z" fill="#8dc149"/><path d="M3.6,0 H5 L6,1.8 L7,0 H8.4 L6,4.3Z" fill="#8dc149"/><path d="M2.6,0 H3.6 L6,4.3 L8.4,0 H9.4 L6,5.9Z" fill="#1e1e1e" opacity="0.55"/></svg>
<span style="top:577.05px;height:15px;line-height:15px;font-size:10.83px;color:#73c991;font-family:'Liberation Sans',sans-serif;white-space:pre;left:136.70px;transform:scaleX(0.9930);transform-origin:left center;">Create.vue</span>
<span style="top:578.05px;height:13px;line-height:13px;font-size:9.2px;color:#73c991;font-family:'Liberation Sans',sans-serif;white-space:pre;font-weight:700;right:1625.50px;">U</span>
<svg style="left:122.5px;top:597.3px;" width="10.4" height="9.36" viewBox="0 0 12 10.4"><path d="M0,0 H2.6 L6,5.9 L9.4,0 H12 L6,10.4 Z" fill="#8dc149"/><path d="M3.6,0 H5 L6,1.8 L7,0 H8.4 L6,4.3Z" fill="#8dc149"/><path d="M2.6,0 H3.6 L6,4.3 L8.4,0 H9.4 L6,5.9Z" fill="#1e1e1e" opacity="0.55"/></svg>
<span style="top:595.38px;height:15px;line-height:15px;font-size:10.83px;color:#73c991;font-family:'Liberation Sans',sans-serif;white-space:pre;left:136.70px;transform:scaleX(0.9941);transform-origin:left center;">FormCost.vue</span>
<span style="top:596.38px;height:13px;line-height:13px;font-size:9.2px;color:#73c991;font-family:'Liberation Sans',sans-serif;white-space:pre;font-weight:700;right:1625.50px;">U</span>
<svg style="left:122.5px;top:615.63px;" width="10.4" height="9.36" viewBox="0 0 12 10.4"><path d="M0,0 H2.6 L6,5.9 L9.4,0 H12 L6,10.4 Z" fill="#8dc149"/><path d="M3.6,0 H5 L6,1.8 L7,0 H8.4 L6,4.3Z" fill="#8dc149"/><path d="M2.6,0 H3.6 L6,4.3 L8.4,0 H9.4 L6,5.9Z" fill="#1e1e1e" opacity="0.55"/></svg>
<span style="top:613.71px;height:15px;line-height:15px;font-size:10.83px;color:#73c991;font-family:'Liberation Sans',sans-serif;white-space:pre;left:136.70px;">FormCreateCost.vue</span>
<span style="top:614.71px;height:13px;line-height:13px;font-size:9.2px;color:#73c991;font-family:'Liberation Sans',sans-serif;white-space:pre;font-weight:700;right:1625.50px;">U</span>
<svg style="left:122.5px;top:633.96px;" width="10.4" height="9.36" viewBox="0 0 12 10.4"><path d="M0,0 H2.6 L6,5.9 L9.4,0 H12 L6,10.4 Z" fill="#8dc149"/><path d="M3.6,0 H5 L6,1.8 L7,0 H8.4 L6,4.3Z" fill="#8dc149"/><path d="M2.6,0 H3.6 L6,4.3 L8.4,0 H9.4 L6,5.9Z" fill="#1e1e1e" opacity="0.55"/></svg>
<span style="top:632.04px;height:15px;line-height:15px;font-size:10.83px;color:#e2c08d;font-family:'Liberation Sans',sans-serif;white-space:pre;left:136.70px;transform:scaleX(1.0073);transform-origin:left center;">index.vue</span>
<span style="top:633.04px;height:13px;line-height:13px;font-size:9.2px;color:#e2c08d;font-family:'Liberation Sans',sans-serif;white-space:pre;font-weight:700;right:1625.50px;">M</span>
<svg style="left:116.0px;top:652.877px;" width="10" height="10" viewBox="0 0 10 10"><path d="M1,3 L5,7 L9,3" fill="none" stroke="#c5c5c5" stroke-width="1"/></svg>
<span style="top:650.38px;height:15px;line-height:15px;font-size:10.83px;color:#cca700;font-family:'Liberation Sans',sans-serif;white-space:pre;left:130.00px;transform:scaleX(1.0454);transform-origin:left center;">motelArea</span>
<div style="left:287px;top:654.877px;width:6px;height:6px;background:#7d6a10;border-radius:50%;"></div>
<svg style="left:122.5px;top:670.63px;" width="10.4" height="9.36" viewBox="0 0 12 10.4"><path d="M0,0 H2.6 L6,5.9 L9.4,0 H12 L6,10.4 Z" fill="#8dc149"/><path d="M3.6,0 H5 L6,1.8 L7,0 H8.4 L6,4.3Z" fill="#8dc149"/><path d="M2.6,0 H3.6 L6,4.3 L8.4,0 H9.4 L6,5.9Z" fill="#1e1e1e" opacity="0.55"/></svg>
<span style="top:668.71px;height:15px;line-height:15px;font-size:10.83px;color:#e2c08d;font-family:'Liberation Sans',sans-serif;white-space:pre;left:136.70px;transform:scaleX(0.9955);transform-origin:left center;">FormArea.vue</span>
<span style="top:669.71px;height:13px;line-height:13px;font-size:9.2px;color:#e2c08d;font-family:'Liberation Sans',sans-serif;white-space:pre;font-weight:700;right:1625.50px;">M</span>
<svg style="left:122.5px;top:688.96px;" width="10.4" height="9.36" viewBox="0 0 12 10.4"><path d="M0,0 H2.6 L6,5.9 L9.4,0 H12 L6,10.4 Z" fill="#8dc149"/><path d="M3.6,0 H5 L6,1.8 L7,0 H8.4 L6,4.3Z" fill="#8dc149"/><path d="M2.6,0 H3.6 L6,4.3 L8.4,0 H9.4 L6,5.9Z" fill="#1e1e1e" opacity="0.55"/></svg>
<span style="top:687.04px;height:15px;line-height:15px;font-size:10.83px;color:#e2c08d;font-family:'Liberation Sans',sans-serif;white-space:pre;left:136.70px;transform:scaleX(1.0078);transform-origin:left center;">FormConvenient.vue</span>
<span style="top:688.04px;height:13px;line-height:13px;font-size:9.2px;color:#e2c08d;font-family:'Liberation Sans',sans-serif;white-space:pre;font-weight:700;right:1625.50px;">M</span>
<div style="left:95px;top:703.4095px;width:213px;height:18.933px;background:#37373d;"></div>
<svg style="left:122.5px;top:707.3px;" width="10.4" height="9.36" viewBox="0 0 12 10.4"><path d="M0,0 H2.6 L6,5.9 L9.4,0 H12 L6,10.4 Z" fill="#8dc149"/><path d="M3.6,0 H5 L6,1.8 L7,0 H8.4 L6,4.3Z" fill="#8dc149"/><path d="M2.6,0 H3.6 L6,4.3 L8.4,0 H9.4 L6,5.9Z" fill="#1e1e1e" opacity="0.55"/></svg>
<span style="top:705.38px;height:15px;line-height:15px;font-size:10.83px;color:#e2c08d;font-family:'Liberation Sans',sans-serif;white-space:pre;left:136.70px;transform:scaleX(0.9941);transform-origin:left center;">FormCost.vue</span>
<span style="top:706.38px;height:13px;line-height:13px;font-size:9.2px;color:#e2c08d;font-family:'Liberation Sans',sans-serif;white-space:pre;font-weight:700;right:1625.50px;">M</span>
<svg style="left:122.5px;top:725.63px;" width="10.4" height="9.36" viewBox="0 0 12 10.4"><path d="M0,0 H2.6 L6,5.9 L9.4,0 H12 L6,10.4 Z" fill="#8dc149"/><path d="M3.6,0 H5 L6,1.8 L7,0 H8.4 L6,4.3Z" fill="#8dc149"/><path d="M2.6,0 H3.6 L6,4.3 L8.4,0 H9.4 L6,5.9Z" fill="#1e1e1e" opacity="0.55"/></svg>
<span style="top:723.71px;height:15px;line-height:15px;font-size:10.83px;color:#cccccc;font-family:'Liberation Sans',sans-serif;white-space:pre;left:136.70px;transform:scaleX(1.0119);transform-origin:left center;">FormCreateConvenient.vue</span>
<svg style="left:122.5px;top:743.96px;" width="10.4" height="9.36" viewBox="0 0 12 10.4"><path d="M0,0 H2.6 L6,5.9 L9.4,0 H12 L6,10.4 Z" fill="#8dc149"/><path d="M3.6,0 H5 L6,1.8 L7,0 H8.4 L6,4.3Z" fill="#8dc149"/><path d="M2.6,0 H3.6 L6,4.3 L8.4,0 H9.4 L6,5.9Z" fill="#1e1e1e" opacity="0.55"/></svg>
<span style="top:742.04px;height:15px;line-height:15px;font-size:10.83px;color:#e2c08d;font-family:'Liberation Sans',sans-serif;white-space:pre;left:136.70px;">FormCreateCost.vue</span>
<span style="top:743.04px;height:13px;line-height:13px;font-size:9.2px;color:#e2c08d;font-family:'Liberation Sans',sans-serif;white-space:pre;font-weight:700;right:1625.50px;">M</span>
<svg style="left:122.5px;top:762.3px;" width="10.4" height="9.36" viewBox="0 0 12 10.4"><path d="M0,0 H2.6 L6,5.9 L9.4,0 H12 L6,10.4 Z" fill="#8dc149"/><path d="M3.6,0 H5 L6,1.8 L7,0 H8.4 L6,4.3Z" fill="#8dc149"/><path d="M2.6,0 H3.6 L6,4.3 L8.4,0 H9.4 L6,5.9Z" fill="#1e1e1e" opacity="0.55"/></svg>
<span style="top:760.38px;height:15px;line-height:15px;font-size:10.83px;color:#e2c08d;font-family:'Liberation Sans',sans-serif;white-space:pre;left:136.70px;transform:scaleX(0.9888);transform-origin:left center;">FormRules.vue</span>
<span style="top:761.38px;height:13px;line-height:13px;font-size:9.2px;color:#e2c08d;font-family:'Liberation Sans',sans-serif;white-space:pre;font-weight:700;right:1625.50px;">M</span>
<svg style="left:122.5px;top:780.63px;" width="10.4" height="9.36" viewBox="0 0 12 10.4"><path d="M0,0 H2.6 L6,5.9 L9.4,0 H12 L6,10.4 Z" fill="#8dc149"/><path d="M3.6,0 H5 L6,1.8 L7,0 H8.4 L6,4.3Z" fill="#8dc149"/><path d="M2.6,0 H3.6 L6,4.3 L8.4,0 H9.4 L6,5.9Z" fill="#1e1e1e" opacity="0.55"/></svg>
<span style="top:778.71px;height:15px;line-height:15px;font-size:10.83px;color:#cca700;font-family:'Liberation Sans',sans-serif;white-space:pre;left:136.70px;transform:scaleX(1.0073);transform-origin:left center;">index.vue</span>
<span style="top:779.71px;height:13px;line-height:13px;font-size:9.2px;color:#cca700;font-family:'Liberation Sans',sans-serif;white-space:pre;font-weight:700;right:1625.50px;">1, M</span>
<svg style="left:122.5px;top:798.96px;" width="10.4" height="9.36" viewBox="0 0 12 10.4"><path d="M0,0 H2.6 L6,5.9 L9.4,0 H12 L6,10.4 Z" fill="#8dc149"/><path d="M3.6,0 H5 L6,1.8 L7,0 H8.4 L6,4.3Z" fill="#8dc149"/><path d="M2.6,0 H3.6 L6,4.3 L8.4,0 H9.4 L6,5.9Z" fill="#1e1e1e" opacity="0.55"/></svg>
<span style="top:797.04px;height:15px;line-height:15px;font-size:10.83px;color:#cccccc;font-family:'Liberation Sans',sans-serif;white-space:pre;left:136.70px;transform:scaleX(0.9881);transform-origin:left center;">ShowArea.vue</span>
<svg style="left:109.8px;top:817.874px;" width="10" height="10" viewBox="0 0 10 10"><path d="M3.5,1 L7.5,5 L3.5,9" fill="none" stroke="#c5c5c5" stroke-width="1"/></svg>
<span style="top:815.37px;height:15px;line-height:15px;font-size:10.83px;color:#cccccc;font-family:'Liberation Sans',sans-serif;white-space:pre;left:123.30px;transform:scaleX(1.0431);transform-origin:left center;">constant</span>
<svg style="left:109.8px;top:836.2069999999999px;" width="10" height="10" viewBox="0 0 10 10"><path d="M3.5,1 L7.5,5 L3.5,9" fill="none" stroke="#c5c5c5" stroke-width="1"/></svg>
<span style="top:833.71px;height:15px;line-height:15px;font-size:10.83px;color:#cccccc;font-family:'Liberation Sans',sans-serif;white-space:pre;left:123.30px;transform:scaleX(1.0252);transform-origin:left center;">lang</span>
<svg style="left:109.3px;top:854.54px;" width="10" height="10" viewBox="0 0 10 10"><path d="M1,3 L5,7 L9,3" fill="none" stroke="#c5c5c5" stroke-width="1"/></svg>
<span style="top:852.04px;height:15px;line-height:15px;font-size:10.83px;color:#cccccc;font-family:'Liberation Sans',sans-serif;white-space:pre;left:123.30px;transform:scaleX(1.0288);transform-origin:left center;">layouts</span>
<svg style="left:115.8px;top:872.29px;" width="10.4" height="9.36" viewBox="0 0 12 10.4"><path d="M0,0 H2.6 L6,5.9 L9.4,0 H12 L6,10.4 Z" fill="#8dc149"/><path d="M3.6,0 H5 L6,1.8 L7,0 H8.4 L6,4.3Z" fill="#8dc149"/><path d="M2.6,0 H3.6 L6,4.3 L8.4,0 H9.4 L6,5.9Z" fill="#1e1e1e" opacity="0.55"/></svg>
<span style="top:870.37px;height:15px;line-height:15px;font-size:10.83px;color:#cccccc;font-family:'Liberation Sans',sans-serif;white-space:pre;left:130.00px;transform:scaleX(1.0569);transform-origin:left center;">default.vue</span>
<svg style="left:115.8px;top:890.63px;" width="10.4" height="9.36" viewBox="0 0 12 10.4"><path d="M0,0 H2.6 L6,5.9 L9.4,0 H12 L6,10.4 Z" fill="#8dc149"/><path d="M3.6,0 H5 L6,1.8 L7,0 H8.4 L6,4.3Z" fill="#8dc149"/><path d="M2.6,0 H3.6 L6,4.3 L8.4,0 H9.4 L6,5.9Z" fill="#1e1e1e" opacity="0.55"/></svg>
<span style="top:888.71px;height:15px;line-height:15px;font-size:10.83px;color:#cccccc;font-family:'Liberation Sans',sans-serif;white-space:pre;left:130.00px;transform:scaleX(1.0366);transform-origin:left center;">error.vue</span>
<svg style="left:115.8px;top:908.96px;" width="10.4" height="9.36" viewBox="0 0 12 10.4"><path d="M0,0 H2.6 L6,5.9 L9.4,0 H12 L6,10.4 Z" fill="#8dc149"/><path d="M3.6,0 H5 L6,1.8 L7,0 H8.4 L6,4.3Z" fill="#8dc149"/><path d="M2.6,0 H3.6 L6,4.3 L8.4,0 H9.4 L6,5.9Z" fill="#1e1e1e" opacity="0.55"/></svg>
<span style="top:907.04px;height:15px;line-height:15px;font-size:10.83px;color:#cccccc;font-family:'Liberation Sans',sans-serif;white-space:pre;left:130.00px;transform:scaleX(1.0217);transform-origin:left center;">login.vue</span>
<svg style="left:114.2px;top:927.3719999999998px;" width="11" height="11" viewBox="0 0 11 11"><circle cx="5.5" cy="5.5" r="4.6" fill="none" stroke="#519aba" stroke-width="1"/><rect x="5" y="4.7" width="1" height="3.4" fill="#519aba"/><rect x="5" y="2.8" width="1" height="1.1" fill="#519aba"/></svg>
<span style="top:925.37px;height:15px;line-height:15px;font-size:10.83px;color:#cccccc;font-family:'Liberation Sans',sans-serif;white-space:pre;left:130.00px;transform:scaleX(0.9629);transform-origin:left center;">README.md</span>
<svg style="left:109.8px;top:946.2049999999999px;" width="10" height="10" viewBox="0 0 10 10"><path d="M3.5,1 L7.5,5 L3.5,9" fill="none" stroke="#c5c5c5" stroke-width="1"/></svg>
<span style="top:943.70px;height:15px;line-height:15px;font-size:10.83px;color:#cccccc;font-family:'Liberation Sans',sans-serif;white-space:pre;left:123.30px;transform:scaleX(1.0474);transform-origin:left center;">middleware</span>
<svg style="left:109.8px;top:964.538px;" width="10" height="10" viewBox="0 0 10 10"><path d="M3.5,1 L7.5,5 L3.5,9" fill="none" stroke="#c5c5c5" stroke-width="1"/></svg>
<span style="top:962.04px;height:15px;line-height:15px;font-size:10.83px;color:#cccccc;font-family:'Liberation Sans',sans-serif;white-space:pre;left:123.30px;transform:scaleX(1.0176);transform-origin:left center;">node_modules</span>
<svg style="left:109.3px;top:982.8709999999999px;" width="10" height="10" viewBox="0 0 10 10"><path d="M1,3 L5,7 L9,3" fill="none" stroke="#c5c5c5" stroke-width="1"/></svg>
<span style="top:980.37px;height:15px;line-height:15px;font-size:10.83px;color:#cccccc;font-family:'Liberation Sans',sans-serif;white-space:pre;left:123.30px;transform:scaleX(0.9927);transform-origin:left center;">pages</span>
<div style="left:95px;top:997.0374999999999px;width:213px;height:10.262500000000045px;overflow:hidden;"><svg style="left:22px;top:3px" width="11" height="10" viewBox="0 0 12 10.4"><path d="M0,0 H2.6 L6,5.9 L9.4,0 H12 L6,10.4 Z" fill="#8dc149"/></svg><span style="left:35px;top:1.5px;font-size:10.83px;line-height:15px;color:#cccccc;">index.vue</span></div>
<div style="left:118px;top:667px;width:1px;height:146px;background:#585858;"></div>
<div style="left:95px;top:1007.3px;width:213px;height:18.4px;background:#252526;border-top:1px solid #3c3c3c;"></div>
<svg style="left:98px;top:1011.6999999999999px;" width="10" height="10" viewBox="0 0 10 10"><path d="M3.5,1 L7.5,5 L3.5,9" fill="none" stroke="#c5c5c5" stroke-width="1"/></svg>
<span style="top:1010.10px;height:13px;line-height:13px;font-size:9.2px;color:#cfcfcf;font-family:'Liberation Sans',sans-serif;white-space:pre;font-weight:700;left:111.70px;transform:scaleX(0.9844);transform-origin:left center;">OUTLINE</span>
<div style="left:95px;top:1025.6px;width:213px;height:18.4px;background:#252526;border-top:1px solid #3c3c3c;"></div>
<svg style="left:98px;top:1030.0px;" width="10" height="10" viewBox="0 0 10 10"><path d="M3.5,1 L7.5,5 L3.5,9" fill="none" stroke="#c5c5c5" stroke-width="1"/></svg>
<span style="top:1028.40px;height:13px;line-height:13px;font-size:9.2px;color:#cfcfcf;font-family:'Liberation Sans',sans-serif;white-space:pre;font-weight:700;left:111.70px;transform:scaleX(0.9936);transform-origin:left center;">TIMELINE</span>
<div style="left:95px;top:1044px;width:213px;height:18.4px;background:#252526;border-top:1px solid #3c3c3c;"></div>
<svg style="left:98px;top:1048.4px;" width="10" height="10" viewBox="0 0 10 10"><path d="M3.5,1 L7.5,5 L3.5,9" fill="none" stroke="#c5c5c5" stroke-width="1"/></svg>
<span style="top:1046.80px;height:13px;line-height:13px;font-size:9.2px;color:#cfcfcf;font-family:'Liberation Sans',sans-serif;white-space:pre;font-weight:700;left:111.70px;transform:scaleX(0.9602);transform-origin:left center;">NPM SCRIPTS</span>
<div style="left:308px;top:80px;width:708px;height:733px;background:#1e1e1e;"></div>
<div style="left:308px;top:80px;width:708px;height:29px;background:#252526;"></div>
<div style="left:308px;top:80px;width:58.39999999999998px;height:29px;background:#2d2d2d;border-right:1px solid #252526;"></div>
<span style="top:87.00px;height:15px;line-height:15px;font-size:10.83px;color:#8f8f8f;font-family:'Liberation Sans',sans-serif;white-space:pre;left:308.00px;transform:scaleX(0.9850);transform-origin:left center;">ent.vue</span>
<div style="left:366.4px;top:80px;width:152.20000000000005px;height:29px;background:#2d2d2d;border-right:1px solid #252526;"></div>
<svg style="left:379.8px;top:89.62px;" width="10.4" height="9.36" viewBox="0 0 12 10.4"><path d="M0,0 H2.6 L6,5.9 L9.4,0 H12 L6,10.4 Z" fill="#8dc149"/><path d="M3.6,0 H5 L6,1.8 L7,0 H8.4 L6,4.3Z" fill="#8dc149"/><path d="M2.6,0 H3.6 L6,4.3 L8.4,0 H9.4 L6,5.9Z" fill="#1e1e1e" opacity="0.55"/></svg>
<span style="top:87.00px;height:15px;line-height:15px;font-size:10.83px;color:#8f8f8f;font-family:'Liberation Sans',sans-serif;white-space:pre;left:393.70px;">FormCreateCost.vue</span>
<div style="left:518.6px;top:80px;width:100.10000000000002px;height:29px;background:#2d2d2d;border-right:1px solid #252526;"></div>
<svg style="left:530.8px;top:89.62px;" width="10.4" height="9.36" viewBox="0 0 12 10.4"><path d="M0,0 H2.6 L6,5.9 L9.4,0 H12 L6,10.4 Z" fill="#8dc149"/><path d="M3.6,0 H5 L6,1.8 L7,0 H8.4 L6,4.3Z" fill="#8dc149"/><path d="M2.6,0 H3.6 L6,4.3 L8.4,0 H9.4 L6,5.9Z" fill="#1e1e1e" opacity="0.55"/></svg>
<span style="top:87.00px;height:15px;line-height:15px;font-size:10.83px;color:#8f8f8f;font-family:'Liberation Sans',sans-serif;white-space:pre;left:544.80px;transform:scaleX(1.0073);transform-origin:left center;">index.vue</span>
<div style="left:618.7px;top:80px;width:123.69999999999993px;height:29px;background:#2d2d2d;border-right:1px solid #252526;"></div>
<svg style="left:631.1px;top:89.62px;" width="10.4" height="9.36" viewBox="0 0 12 10.4"><path d="M0,0 H2.6 L6,5.9 L9.4,0 H12 L6,10.4 Z" fill="#8dc149"/><path d="M3.6,0 H5 L6,1.8 L7,0 H8.4 L6,4.3Z" fill="#8dc149"/><path d="M2.6,0 H3.6 L6,4.3 L8.4,0 H9.4 L6,5.9Z" fill="#1e1e1e" opacity="0.55"/></svg>
<span style="top:87.00px;height:15px;line-height:15px;font-size:10.83px;color:#8f8f8f;font-family:'Liberation Sans',sans-serif;white-space:pre;left:645.00px;transform:scaleX(0.9888);transform-origin:left center;">FormRules.vue</span>
<div style="left:742.4px;top:80px;width:183px;height:29px;background:#1e1e1e;"></div>
<svg style="left:754.8px;top:89.62px;" width="10.4" height="9.36" viewBox="0 0 12 10.4"><path d="M0,0 H2.6 L6,5.9 L9.4,0 H12 L6,10.4 Z" fill="#8dc149"/><path d="M3.6,0 H5 L6,1.8 L7,0 H8.4 L6,4.3Z" fill="#8dc149"/><path d="M2.6,0 H3.6 L6,4.3 L8.4,0 H9.4 L6,5.9Z" fill="#1e1e1e" opacity="0.55"/></svg>
<span style="top:87.00px;height:15px;line-height:15px;font-size:10.83px;color:#ffffff;font-family:'Liberation Sans',sans-serif;white-space:pre;left:768.70px;">FormCost.vue</span>
<span style="top:88.10px;height:13px;line-height:13px;font-size:9.6px;color:#9d9d9d;font-family:'Liberation Sans',sans-serif;white-space:pre;left:842.50px;transform:scaleX(1.0717);transform-origin:left center;">…/motelArea</span>
<svg style="left:908px;top:90.5px;" width="8" height="8" viewBox="0 0 8 8"><path d="M1,1 L7,7 M7,1 L1,7" stroke="#e0e0e0" stroke-width="1.1"/></svg>
<svg style="left:933px;top:87px;" width="14" height="14" viewBox="0 0 14 14"><g fill="none" stroke="#c5c5c5" stroke-width="1.1"><circle cx="3" cy="3" r="1.6"/><circle cx="11" cy="11" r="1.6"/><path d="M3,4.6 V9 L5,11 M3,9 L1,11 M11,9.4 V5 L9,3 M11,5 L13,3"/></g></svg>
<svg style="left:961.5px;top:88px;" width="12" height="12" viewBox="0 0 12 12"><g fill="none" stroke="#c5c5c5" stroke-width="1.1"><rect x="0.6" y="0.6" width="10.8" height="10.8"/><path d="M6,0.6 V11.4"/></g></svg>
<div style="left:988.6px;top:93.8px;width:1.6px;height:1.6px;background:#c5c5c5;border-radius:50%;"></div>
<div style="left:992.9px;top:93.8px;width:1.6px;height:1.6px;background:#c5c5c5;border-radius:50%;"></div>
<div style="left:997.2px;top:93.8px;width:1.6px;height:1.6px;background:#c5c5c5;border-radius:50%;"></div>
<span style="top:110.50px;height:15px;line-height:15px;font-size:10.83px;color:#a9a9a9;font-family:'Liberation Sans',sans-serif;white-space:pre;left:320.60px;transform:scaleX(1.0593);transform-origin:left center;">components</span>
<svg style="left:383.5px;top:113.3px;" width="10" height="10" viewBox="0 0 10 10"><path d="M3.5,1 L7.5,5 L3.5,9" fill="none" stroke="#a0a0a0" stroke-width="1"/></svg>
<span style="top:110.50px;height:15px;line-height:15px;font-size:10.83px;color:#a9a9a9;font-family:'Liberation Sans',sans-serif;white-space:pre;left:395.60px;transform:scaleX(1.0434);transform-origin:left center;">motelArea</span>
<svg style="left:449px;top:113.3px;" width="10" height="10" viewBox="0 0 10 10"><path d="M3.5,1 L7.5,5 L3.5,9" fill="none" stroke="#a0a0a0" stroke-width="1"/></svg>
<svg style="left:465.4px;top:113.12px;" width="10.4" height="9.36" viewBox="0 0 12 10.4"><path d="M0,0 H2.6 L6,5.9 L9.4,0 H12 L6,10.4 Z" fill="#8dc149"/><path d="M3.6,0 H5 L6,1.8 L7,0 H8.4 L6,4.3Z" fill="#8dc149"/><path d="M2.6,0 H3.6 L6,4.3 L8.4,0 H9.4 L6,5.9Z" fill="#1e1e1e" opacity="0.55"/></svg>
<span style="top:110.50px;height:15px;line-height:15px;font-size:10.83px;color:#a9a9a9;font-family:'Liberation Sans',sans-serif;white-space:pre;left:479.20px;transform:scaleX(0.9926);transform-origin:left center;">FormCost.vue</span>
<svg style="left:548.5px;top:113.3px;" width="10" height="10" viewBox="0 0 10 10"><path d="M3.5,1 L7.5,5 L3.5,9" fill="none" stroke="#a0a0a0" stroke-width="1"/></svg>
<span style="top:110.50px;height:15px;line-height:15px;font-size:10.83px;color:#a9a9a9;font-family:'Liberation Sans',sans-serif;white-space:pre;left:561.30px;transform:scaleX(1.3132);transform-origin:left center;">{}</span>
<span style="top:110.50px;height:15px;line-height:15px;font-size:10.83px;color:#a9a9a9;font-family:'Liberation Sans',sans-serif;white-space:pre;left:579.30px;transform:scaleX(1.0107);transform-origin:left center;">"FormCost.vue"</span>
<svg style="left:658px;top:113.3px;" width="10" height="10" viewBox="0 0 10 10"><path d="M3.5,1 L7.5,5 L3.5,9" fill="none" stroke="#a0a0a0" stroke-width="1"/></svg>
<svg style="left:670px;top:112.3px;" width="12" height="12" viewBox="0 0 12 12"><g fill="none" stroke="#75beff" stroke-width="1"><path d="M6,1 L11,3 V8.5 L6,10.5 L1,8.5 V3 Z"/><path d="M1,3 L6,5 L11,3 M6,5 V10.5"/></g></svg>
<span style="top:110.50px;height:15px;line-height:15px;font-size:10.83px;color:#a9a9a9;font-family:'Liberation Sans',sans-serif;white-space:pre;left:687.30px;transform:scaleX(1.0763);transform-origin:left center;">template</span>
<svg style="left:734.5px;top:113.3px;" width="10" height="10" viewBox="0 0 10 10"><path d="M3.5,1 L7.5,5 L3.5,9" fill="none" stroke="#a0a0a0" stroke-width="1"/></svg>
<svg style="left:746.6px;top:112.3px;" width="12" height="12" viewBox="0 0 12 12"><g fill="none" stroke="#75beff" stroke-width="1"><path d="M6,1 L11,3 V8.5 L6,10.5 L1,8.5 V3 Z"/><path d="M1,3 L6,5 L11,3 M6,5 V10.5"/></g></svg>
<span style="top:110.50px;height:15px;line-height:15px;font-size:10.83px;color:#a9a9a9;font-family:'Liberation Sans',sans-serif;white-space:pre;left:763.80px;transform:scaleX(1.0390);transform-origin:left center;">v-layout</span>
<svg style="left:805.5px;top:113.3px;" width="10" height="10" viewBox="0 0 10 10"><path d="M3.5,1 L7.5,5 L3.5,9" fill="none" stroke="#a0a0a0" stroke-width="1"/></svg>
<svg style="left:817.8px;top:112.3px;" width="12" height="12" viewBox="0 0 12 12"><g fill="none" stroke="#75beff" stroke-width="1"><path d="M6,1 L11,3 V8.5 L6,10.5 L1,8.5 V3 Z"/><path d="M1,3 L6,5 L11,3 M6,5 V10.5"/></g></svg>
<span style="top:110.50px;height:15px;line-height:15px;font-size:10.83px;color:#a9a9a9;font-family:'Liberation Sans',sans-serif;white-space:pre;left:835.00px;transform:scaleX(1.0705);transform-origin:left center;">v-flex</span>
<div style="left:308px;top:127.5px;width:707px;height:685.5px;overflow:hidden;"><div style="left:59px;top:185.50px;width:649px;height:15px;border-top:1px solid #2f2f2f;border-bottom:1px solid #2f2f2f;"></div><div style="left:58.3px;top:-6.25px;width:1px;height:16.03px;background:#404040;"></div><div style="left:72.3px;top:-6.25px;width:1px;height:16.03px;background:#404040;"></div><div style="left:86.3px;top:-6.25px;width:1px;height:16.03px;background:#404040;"></div><div style="left:100.3px;top:-6.25px;width:1px;height:16.03px;background:#404040;"></div><div style="left:114.3px;top:-6.25px;width:1px;height:16.03px;background:#404040;"></div><div style="left:58.3px;top:9.58px;width:1px;height:16.03px;background:#404040;"></div><div style="left:72.3px;top:9.58px;width:1px;height:16.03px;background:#404040;"></div><div style="left:86.3px;top:9.58px;width:1px;height:16.03px;background:#404040;"></div><div style="left:100.3px;top:9.58px;width:1px;height:16.03px;background:#404040;"></div><div style="left:114.3px;top:9.58px;width:1px;height:16.03px;background:#404040;"></div><div style="left:58.3px;top:25.42px;width:1px;height:16.03px;background:#404040;"></div><div style="left:72.3px;top:25.42px;width:1px;height:16.03px;background:#404040;"></div><div style="left:86.3px;top:25.42px;width:1px;height:16.03px;background:#404040;"></div><div style="left:100.3px;top:25.42px;width:1px;height:16.03px;background:#404040;"></div><div style="left:114.3px;top:25.42px;width:1px;height:16.03px;background:#404040;"></div><div style="left:58.3px;top:41.25px;width:1px;height:16.03px;background:#404040;"></div><div style="left:72.3px;top:41.25px;width:1px;height:16.03px;background:#404040;"></div><div style="left:86.3px;top:41.25px;width:1px;height:16.03px;background:#404040;"></div><div style="left:100.3px;top:41.25px;width:1px;height:16.03px;background:#404040;"></div><div style="left:58.3px;top:57.08px;width:1px;height:16.03px;background:#404040;"></div><div style="left:72.3px;top:57.08px;width:1px;height:16.03px;background:#404040;"></div><div style="left:86.3px;top:57.08px;width:1px;height:16.03px;background:#404040;"></div><div style="left:58.3px;top:72.92px;width:1px;height:16.03px;background:#404040;"></div><div style="left:72.3px;top:72.92px;width:1px;height:16.03px;background:#404040;"></div><div style="left:58.3px;top:88.75px;width:1px;height:16.03px;background:#404040;"></div><div style="left:72.3px;top:88.75px;width:1px;height:16.03px;background:#404040;"></div><div style="left:58.3px;top:104.58px;width:1px;height:16.03px;background:#404040;"></div><div style="left:72.3px;top:104.58px;width:1px;height:16.03px;background:#404040;"></div><div style="left:86.3px;top:104.58px;width:1px;height:16.03px;background:#404040;"></div><div style="left:58.3px;top:120.41px;width:1px;height:16.03px;background:#404040;"></div><div style="left:72.3px;top:120.41px;width:1px;height:16.03px;background:#404040;"></div><div style="left:86.3px;top:120.41px;width:1px;height:16.03px;background:#404040;"></div><div style="left:100.3px;top:120.41px;width:1px;height:16.03px;background:#404040;"></div><div style="left:58.3px;top:136.25px;width:1px;height:16.03px;background:#404040;"></div><div style="left:72.3px;top:136.25px;width:1px;height:16.03px;background:#404040;"></div><div style="left:86.3px;top:136.25px;width:1px;height:16.03px;background:#404040;"></div><div style="left:100.3px;top:136.25px;width:1px;height:16.03px;background:#404040;"></div><div style="left:58.3px;top:152.08px;width:1px;height:16.03px;background:#404040;"></div><div style="left:72.3px;top:152.08px;width:1px;height:16.03px;background:#404040;"></div><div style="left:86.3px;top:152.08px;width:1px;height:16.03px;background:#404040;"></div><div style="left:58.3px;top:167.91px;width:1px;height:16.03px;background:#404040;"></div><div style="left:72.3px;top:167.91px;width:1px;height:16.03px;background:#404040;"></div><div style="left:58.3px;top:183.75px;width:1px;height:16.03px;background:#404040;"></div><div style="left:72.3px;top:183.75px;width:1px;height:16.03px;background:#404040;"></div><div style="left:58.3px;top:199.58px;width:1px;height:16.03px;background:#404040;"></div><div style="left:72.3px;top:199.58px;width:1px;height:16.03px;background:#404040;"></div><div style="left:86.3px;top:199.58px;width:1px;height:16.03px;background:#6e6e6e;"></div><div style="left:58.3px;top:215.41px;width:1px;height:16.03px;background:#404040;"></div><div style="left:72.3px;top:215.41px;width:1px;height:16.03px;background:#404040;"></div><div style="left:86.3px;top:215.41px;width:1px;height:16.03px;background:#6e6e6e;"></div><div style="left:100.3px;top:215.41px;width:1px;height:16.03px;background:#404040;"></div><div style="left:58.3px;top:231.25px;width:1px;height:16.03px;background:#404040;"></div><div style="left:72.3px;top:231.25px;width:1px;height:16.03px;background:#404040;"></div><div style="left:86.3px;top:231.25px;width:1px;height:16.03px;background:#6e6e6e;"></div><div style="left:100.3px;top:231.25px;width:1px;height:16.03px;background:#404040;"></div><div style="left:114.3px;top:231.25px;width:1px;height:16.03px;background:#404040;"></div><div style="left:58.3px;top:247.08px;width:1px;height:16.03px;background:#404040;"></div><div style="left:72.3px;top:247.08px;width:1px;height:16.03px;background:#404040;"></div><div style="left:86.3px;top:247.08px;width:1px;height:16.03px;background:#6e6e6e;"></div><div style="left:100.3px;top:247.08px;width:1px;height:16.03px;background:#404040;"></div><div style="left:114.3px;top:247.08px;width:1px;height:16.03px;background:#404040;"></div><div style="left:58.3px;top:262.91px;width:1px;height:16.03px;background:#404040;"></div><div style="left:72.3px;top:262.91px;width:1px;height:16.03px;background:#404040;"></div><div style="left:86.3px;top:262.91px;width:1px;height:16.03px;background:#6e6e6e;"></div><div style="left:100.3px;top:262.91px;width:1px;height:16.03px;background:#404040;"></div><div style="left:114.3px;top:262.91px;width:1px;height:16.03px;background:#404040;"></div><div style="left:128.3px;top:262.91px;width:1px;height:16.03px;background:#404040;"></div><div style="left:58.3px;top:278.74px;width:1px;height:16.03px;background:#404040;"></div><div style="left:72.3px;top:278.74px;width:1px;height:16.03px;background:#404040;"></div><div style="left:86.3px;top:278.74px;width:1px;height:16.03px;background:#6e6e6e;"></div><div style="left:100.3px;top:278.74px;width:1px;height:16.03px;background:#404040;"></div><div style="left:114.3px;top:278.74px;width:1px;height:16.03px;background:#404040;"></div><div style="left:128.3px;top:278.74px;width:1px;height:16.03px;background:#404040;"></div><div style="left:58.3px;top:294.58px;width:1px;height:16.03px;background:#404040;"></div><div style="left:72.3px;top:294.58px;width:1px;height:16.03px;background:#404040;"></div><div style="left:86.3px;top:294.58px;width:1px;height:16.03px;background:#6e6e6e;"></div><div style="left:100.3px;top:294.58px;width:1px;height:16.03px;background:#404040;"></div><div style="left:114.3px;top:294.58px;width:1px;height:16.03px;background:#404040;"></div><div style="left:58.3px;top:310.41px;width:1px;height:16.03px;background:#404040;"></div><div style="left:72.3px;top:310.41px;width:1px;height:16.03px;background:#404040;"></div><div style="left:86.3px;top:310.41px;width:1px;height:16.03px;background:#6e6e6e;"></div><div style="left:100.3px;top:310.41px;width:1px;height:16.03px;background:#404040;"></div><div style="left:114.3px;top:310.41px;width:1px;height:16.03px;background:#404040;"></div><div style="left:58.3px;top:326.24px;width:1px;height:16.03px;background:#404040;"></div><div style="left:72.3px;top:326.24px;width:1px;height:16.03px;background:#404040;"></div><div style="left:86.3px;top:326.24px;width:1px;height:16.03px;background:#6e6e6e;"></div><div style="left:100.3px;top:326.24px;width:1px;height:16.03px;background:#404040;"></div><div style="left:58.3px;top:342.08px;width:1px;height:16.03px;background:#404040;"></div><div style="left:72.3px;top:342.08px;width:1px;height:16.03px;background:#404040;"></div><div style="left:86.3px;top:342.08px;width:1px;height:16.03px;background:#6e6e6e;"></div><div style="left:100.3px;top:342.08px;width:1px;height:16.03px;background:#404040;"></div><div style="left:58.3px;top:357.91px;width:1px;height:16.03px;background:#404040;"></div><div style="left:72.3px;top:357.91px;width:1px;height:16.03px;background:#404040;"></div><div style="left:86.3px;top:357.91px;width:1px;height:16.03px;background:#6e6e6e;"></div><div style="left:100.3px;top:357.91px;width:1px;height:16.03px;background:#404040;"></div><div style="left:58.3px;top:373.74px;width:1px;height:16.03px;background:#404040;"></div><div style="left:72.3px;top:373.74px;width:1px;height:16.03px;background:#404040;"></div><div style="left:86.3px;top:373.74px;width:1px;height:16.03px;background:#6e6e6e;"></div><div style="left:58.3px;top:389.58px;width:1px;height:16.03px;background:#404040;"></div><div style="left:72.3px;top:389.58px;width:1px;height:16.03px;background:#404040;"></div><div style="left:58.3px;top:405.41px;width:1px;height:16.03px;background:#404040;"></div><div style="left:72.3px;top:405.41px;width:1px;height:16.03px;background:#404040;"></div><div style="left:58.3px;top:421.24px;width:1px;height:16.03px;background:#404040;"></div><div style="left:72.3px;top:421.24px;width:1px;height:16.03px;background:#404040;"></div><div style="left:86.3px;top:421.24px;width:1px;height:16.03px;background:#404040;"></div><div style="left:58.3px;top:437.07px;width:1px;height:16.03px;background:#404040;"></div><div style="left:72.3px;top:437.07px;width:1px;height:16.03px;background:#404040;"></div><div style="left:86.3px;top:437.07px;width:1px;height:16.03px;background:#404040;"></div><div style="left:100.3px;top:437.07px;width:1px;height:16.03px;background:#404040;"></div><div style="left:58.3px;top:452.91px;width:1px;height:16.03px;background:#404040;"></div><div style="left:72.3px;top:452.91px;width:1px;height:16.03px;background:#404040;"></div><div style="left:86.3px;top:452.91px;width:1px;height:16.03px;background:#404040;"></div><div style="left:100.3px;top:452.91px;width:1px;height:16.03px;background:#404040;"></div><div style="left:58.3px;top:468.74px;width:1px;height:16.03px;background:#404040;"></div><div style="left:72.3px;top:468.74px;width:1px;height:16.03px;background:#404040;"></div><div style="left:86.3px;top:468.74px;width:1px;height:16.03px;background:#404040;"></div><div style="left:100.3px;top:468.74px;width:1px;height:16.03px;background:#404040;"></div><div style="left:58.3px;top:484.57px;width:1px;height:16.03px;background:#404040;"></div><div style="left:72.3px;top:484.57px;width:1px;height:16.03px;background:#404040;"></div><div style="left:86.3px;top:484.57px;width:1px;height:16.03px;background:#404040;"></div><div style="left:100.3px;top:484.57px;width:1px;height:16.03px;background:#404040;"></div><div style="left:58.3px;top:500.41px;width:1px;height:16.03px;background:#404040;"></div><div style="left:72.3px;top:500.41px;width:1px;height:16.03px;background:#404040;"></div><div style="left:86.3px;top:500.41px;width:1px;height:16.03px;background:#404040;"></div><div style="left:100.3px;top:500.41px;width:1px;height:16.03px;background:#404040;"></div><div style="left:58.3px;top:516.24px;width:1px;height:16.03px;background:#404040;"></div><div style="left:72.3px;top:516.24px;width:1px;height:16.03px;background:#404040;"></div><div style="left:86.3px;top:516.24px;width:1px;height:16.03px;background:#404040;"></div><div style="left:58.3px;top:532.07px;width:1px;height:16.03px;background:#404040;"></div><div style="left:72.3px;top:532.07px;width:1px;height:16.03px;background:#404040;"></div><div style="left:58.3px;top:547.91px;width:1px;height:16.03px;background:#404040;"></div><div style="left:72.3px;top:547.91px;width:1px;height:16.03px;background:#404040;"></div><div style="left:58.3px;top:563.74px;width:1px;height:16.03px;background:#404040;"></div><div style="left:72.3px;top:563.74px;width:1px;height:16.03px;background:#404040;"></div><div style="left:86.3px;top:563.74px;width:1px;height:16.03px;background:#404040;"></div><div style="left:58.3px;top:579.57px;width:1px;height:16.03px;background:#404040;"></div><div style="left:72.3px;top:579.57px;width:1px;height:16.03px;background:#404040;"></div><div style="left:86.3px;top:579.57px;width:1px;height:16.03px;background:#404040;"></div><div style="left:100.3px;top:579.57px;width:1px;height:16.03px;background:#404040;"></div><div style="left:58.3px;top:595.40px;width:1px;height:16.03px;background:#404040;"></div><div style="left:72.3px;top:595.40px;width:1px;height:16.03px;background:#404040;"></div><div style="left:86.3px;top:595.40px;width:1px;height:16.03px;background:#404040;"></div><div style="left:100.3px;top:595.40px;width:1px;height:16.03px;background:#404040;"></div><div style="left:58.3px;top:611.24px;width:1px;height:16.03px;background:#404040;"></div><div style="left:72.3px;top:611.24px;width:1px;height:16.03px;background:#404040;"></div><div style="left:86.3px;top:611.24px;width:1px;height:16.03px;background:#404040;"></div><div style="left:100.3px;top:611.24px;width:1px;height:16.03px;background:#404040;"></div><div style="left:58.3px;top:627.07px;width:1px;height:16.03px;background:#404040;"></div><div style="left:72.3px;top:627.07px;width:1px;height:16.03px;background:#404040;"></div><div style="left:86.3px;top:627.07px;width:1px;height:16.03px;background:#404040;"></div><div style="left:100.3px;top:627.07px;width:1px;height:16.03px;background:#404040;"></div><div style="left:58.3px;top:642.90px;width:1px;height:16.03px;background:#404040;"></div><div style="left:72.3px;top:642.90px;width:1px;height:16.03px;background:#404040;"></div><div style="left:86.3px;top:642.90px;width:1px;height:16.03px;background:#404040;"></div><div style="left:100.3px;top:642.90px;width:1px;height:16.03px;background:#404040;"></div><div style="left:58.3px;top:658.74px;width:1px;height:16.03px;background:#404040;"></div><div style="left:72.3px;top:658.74px;width:1px;height:16.03px;background:#404040;"></div><div style="left:86.3px;top:658.74px;width:1px;height:16.03px;background:#404040;"></div><div style="left:58.3px;top:674.57px;width:1px;height:16.03px;background:#404040;"></div><div style="left:72.3px;top:674.57px;width:1px;height:16.03px;background:#404040;"></div><div style="left:40px;top:200.58px;width:3px;height:15.33px;background:#0c7d9d;"></div><span style="right:670.5px;top:-4.23px;height:16px;line-height:16px;font:11.67px 'Liberation Mono',monospace;color:#858585;">14</span><span style="left:128.30px;top:-4.23px;height:16px;line-height:16px;font:11.67px 'Liberation Mono',monospace;white-space:pre;"><b style="color:#9cdcfe;font-weight:400">single-line</b></span><span style="right:670.5px;top:11.60px;height:16px;line-height:16px;font:11.67px 'Liberation Mono',monospace;color:#858585;">15</span><span style="left:128.30px;top:11.60px;height:16px;line-height:16px;font:11.67px 'Liberation Mono',monospace;white-space:pre;"><b style="color:#9cdcfe;font-weight:400">dense</b></span><span style="right:670.5px;top:27.43px;height:16px;line-height:16px;font:11.67px 'Liberation Mono',monospace;color:#858585;">16</span><span style="left:128.30px;top:27.43px;height:16px;line-height:16px;font:11.67px 'Liberation Mono',monospace;white-space:pre;"><b style="color:#9cdcfe;font-weight:400">outlined</b></span><span style="right:670.5px;top:43.27px;height:16px;line-height:16px;font:11.67px 'Liberation Mono',monospace;color:#858585;">17</span><span style="left:114.30px;top:43.27px;height:16px;line-height:16px;font:11.67px 'Liberation Mono',monospace;white-space:pre;"><b style="color:#808080;font-weight:400">&gt;&lt;/</b><b style="color:#569cd6;font-weight:400">v-text-field</b><b style="color:#808080;font-weight:400">&gt;</b></span><span style="right:670.5px;top:59.10px;height:16px;line-height:16px;font:11.67px 'Liberation Mono',monospace;color:#858585;">18</span><span style="left:100.30px;top:59.10px;height:16px;line-height:16px;font:11.67px 'Liberation Mono',monospace;white-space:pre;"><b style="color:#808080;font-weight:400">&lt;/</b><b style="color:#569cd6;font-weight:400">div</b><b style="color:#808080;font-weight:400">&gt;</b></span><span style="right:670.5px;top:74.93px;height:16px;line-height:16px;font:11.67px 'Liberation Mono',monospace;color:#858585;">19</span><span style="left:86.30px;top:74.93px;height:16px;line-height:16px;font:11.67px 'Liberation Mono',monospace;white-space:pre;"><b style="color:#808080;font-weight:400">&lt;/</b><b style="color:#569cd6;font-weight:400">v-flex</b><b style="color:#808080;font-weight:400">&gt;</b></span><span style="right:670.5px;top:90.77px;height:16px;line-height:16px;font:11.67px 'Liberation Mono',monospace;color:#858585;">20</span><span style="left:86.30px;top:90.77px;height:16px;line-height:16px;font:11.67px 'Liberation Mono',monospace;white-space:pre;"><b style="color:#808080;font-weight:400">&lt;</b><b style="color:#569cd6;font-weight:400">v-flex</b><b style="color:#d4d4d4;font-weight:400"> </b><b style="color:#9cdcfe;font-weight:400">xs12 sm6</b><b style="color:#808080;font-weight:400">&gt;</b></span><span style="right:670.5px;top:106.60px;height:16px;line-height:16px;font:11.67px 'Liberation Mono',monospace;color:#858585;">21</span><span style="left:100.30px;top:106.60px;height:16px;line-height:16px;font:11.67px 'Liberation Mono',monospace;white-space:pre;"><b style="color:#808080;font-weight:400">&lt;</b><b style="color:#569cd6;font-weight:400">div</b><b style="color:#d4d4d4;font-weight:400"> </b><b style="color:#9cdcfe;font-weight:400">class</b><b style="color:#d4d4d4;font-weight:400">=</b><b style="color:#ce9178;font-weight:400">"form-group"</b><b style="color:#808080;font-weight:400">&gt;</b></span><span style="right:670.5px;top:122.43px;height:16px;line-height:16px;font:11.67px 'Liberation Mono',monospace;color:#858585;">22</span><span style="left:114.30px;top:122.43px;height:16px;line-height:16px;font:11.67px 'Liberation Mono',monospace;white-space:pre;"><b style="color:#808080;font-weight:400">&lt;</b><b style="color:#569cd6;font-weight:400">form-label</b><b style="color:#d4d4d4;font-weight:400"> </b><b style="color:#9cdcfe;font-weight:400">:title</b><b style="color:#d4d4d4;font-weight:400">="</b><b style="color:#ce9178;font-weight:400">'Giá 1 khối nước'</b><b style="color:#d4d4d4;font-weight:400">" </b><b style="color:#9cdcfe;font-weight:400">required</b><b style="color:#d4d4d4;font-weight:400"> </b><b style="color:#808080;font-weight:400">/&gt;</b></span><span style="right:670.5px;top:138.26px;height:16px;line-height:16px;font:11.67px 'Liberation Mono',monospace;color:#858585;">23</span><span style="left:114.30px;top:138.26px;height:16px;line-height:16px;font:11.67px 'Liberation Mono',monospace;white-space:pre;"><b style="color:#808080;font-weight:400">&lt;</b><b style="color:#569cd6;font-weight:400">v-text-field</b><b style="color:#d4d4d4;font-weight:400"> </b><b style="color:#9cdcfe;font-weight:400">type</b><b style="color:#d4d4d4;font-weight:400">=</b><b style="color:#ce9178;font-weight:400">"number"</b><b style="color:#d4d4d4;font-weight:400"> </b><b style="color:#9cdcfe;font-weight:400">v-model.number</b><b style="color:#d4d4d4;font-weight:400">="</b><b style="color:#9cdcfe;font-weight:400">waterCostChild</b><b style="color:#d4d4d4;font-weight:400">" </b><b style="color:#9cdcfe;font-weight:400">single-line dense outlined</b></span><span style="right:670.5px;top:154.10px;height:16px;line-height:16px;font:11.67px 'Liberation Mono',monospace;color:#858585;">24</span><span style="left:100.30px;top:154.10px;height:16px;line-height:16px;font:11.67px 'Liberation Mono',monospace;white-space:pre;"><b style="color:#808080;font-weight:400">&lt;/</b><b style="color:#569cd6;font-weight:400">div</b><b style="color:#808080;font-weight:400">&gt;</b></span><span style="right:670.5px;top:169.93px;height:16px;line-height:16px;font:11.67px 'Liberation Mono',monospace;color:#858585;">25</span><span style="left:86.30px;top:169.93px;height:16px;line-height:16px;font:11.67px 'Liberation Mono',monospace;white-space:pre;"><b style="color:#808080;font-weight:400">&lt;/</b><b style="color:#569cd6;font-weight:400">v-flex</b><b style="color:#808080;font-weight:400">&gt;</b></span><span style="right:670.5px;top:185.76px;height:16px;line-height:16px;font:11.67px 'Liberation Mono',monospace;color:#8c8c8c;">26</span><span style="left:86.30px;top:185.76px;height:16px;line-height:16px;font:11.67px 'Liberation Mono',monospace;white-space:pre;"><b style="color:#808080;font-weight:400">&lt;</b><b style="color:#569cd6;font-weight:400">v-flex</b><b style="color:#d4d4d4;font-weight:400"> </b><b style="color:#9cdcfe;font-weight:400">v-for</b><b style="color:#d4d4d4;font-weight:400">="</b><b style="color:#ffd700;font-weight:400">(</b><b style="color:#9cdcfe;font-weight:400">item</b><b style="color:#d4d4d4;font-weight:400">,</b><b style="color:#9cdcfe;font-weight:400">k</b><b style="color:#ffd700;font-weight:400">)</b><b style="color:#d4d4d4;font-weight:400"> </b><b style="color:#569cd6;font-weight:400">in</b><b style="color:#d4d4d4;font-weight:400"> </b><b style="color:#9cdcfe;font-weight:400">listCost</b><b style="color:#d4d4d4;font-weight:400">" </b><b style="color:#9cdcfe;font-weight:400">:key</b><b style="color:#d4d4d4;font-weight:400">="</b><b style="color:#9cdcfe;font-weight:400">k</b><b style="color:#d4d4d4;font-weight:400">" </b><b style="color:#9cdcfe;font-weight:400">xs12 sm6</b><b style="color:#808080;font-weight:400">&gt;</b></span><span style="right:670.5px;top:201.60px;height:16px;line-height:16px;font:11.67px 'Liberation Mono',monospace;color:#858585;">27</span><span style="left:100.30px;top:201.60px;height:16px;line-height:16px;font:11.67px 'Liberation Mono',monospace;white-space:pre;"><b style="color:#808080;font-weight:400">&lt;</b><b style="color:#569cd6;font-weight:400">div</b><b style="color:#d4d4d4;font-weight:400"> </b><b style="color:#9cdcfe;font-weight:400">class</b><b style="color:#d4d4d4;font-weight:400">=</b><b style="color:#ce9178;font-weight:400">"form-group"</b><b style="color:#d4d4d4;font-weight:400"> </b><b style="color:#9cdcfe;font-weight:400">v-if</b><b style="color:#d4d4d4;font-weight:400">="</b><b style="color:#9cdcfe;font-weight:400">item.type</b><b style="color:#d4d4d4;font-weight:400"> ===</b><b style="color:#b5cea8;font-weight:400">3</b><b style="color:#d4d4d4;font-weight:400">"</b><b style="color:#808080;font-weight:400">&gt;</b></span><span style="right:670.5px;top:217.43px;height:16px;line-height:16px;font:11.67px 'Liberation Mono',monospace;color:#858585;">28</span><span style="left:114.30px;top:217.43px;height:16px;line-height:16px;font:11.67px 'Liberation Mono',monospace;white-space:pre;"><b style="color:#808080;font-weight:400">&lt;</b><b style="color:#569cd6;font-weight:400">div</b><b style="color:#d4d4d4;font-weight:400"> </b><b style="color:#9cdcfe;font-weight:400">class</b><b style="color:#d4d4d4;font-weight:400">=</b><b style="color:#ce9178;font-weight:400">"motel-flex relative"</b><b style="color:#808080;font-weight:400">&gt;</b></span><span style="right:670.5px;top:233.26px;height:16px;line-height:16px;font:11.67px 'Liberation Mono',monospace;color:#858585;">29</span><span style="left:128.30px;top:233.26px;height:16px;line-height:16px;font:11.67px 'Liberation Mono',monospace;white-space:pre;"><b style="color:#808080;font-weight:400">&lt;</b><b style="color:#569cd6;font-weight:400">form-label</b><b style="color:#d4d4d4;font-weight:400"> </b><b style="color:#9cdcfe;font-weight:400">:title</b><b style="color:#d4d4d4;font-weight:400">="</b><b style="color:#9cdcfe;font-weight:400">item.name</b><b style="color:#d4d4d4;font-weight:400">" </b><b style="color:#9cdcfe;font-weight:400">required</b><b style="color:#d4d4d4;font-weight:400"> </b><b style="color:#808080;font-weight:400">/&gt;</b></span><span style="right:670.5px;top:249.09px;height:16px;line-height:16px;font:11.67px 'Liberation Mono',monospace;color:#858585;">30</span><span style="left:128.30px;top:249.09px;height:16px;line-height:16px;font:11.67px 'Liberation Mono',monospace;white-space:pre;"><b style="color:#808080;font-weight:400">&lt;</b><b style="color:#569cd6;font-weight:400">div</b><b style="color:#d4d4d4;font-weight:400"> </b><b style="color:#9cdcfe;font-weight:400">class</b><b style="color:#d4d4d4;font-weight:400">=</b><b style="color:#ce9178;font-weight:400">"group-action-table action-field"</b><b style="color:#808080;font-weight:400">&gt;</b></span><span style="right:670.5px;top:264.93px;height:16px;line-height:16px;font:11.67px 'Liberation Mono',monospace;color:#858585;">31</span><span style="left:142.30px;top:264.93px;height:16px;line-height:16px;font:11.67px 'Liberation Mono',monospace;white-space:pre;"><b style="color:#6a9955;font-weight:400">&lt;!-- &lt;i @click="editItem(item,k)" class="fz-16 color-edit fas fa-edit"&gt;&lt;/i&gt; --&gt;</b></span><span style="right:670.5px;top:280.76px;height:16px;line-height:16px;font:11.67px 'Liberation Mono',monospace;color:#858585;">32</span><span style="left:142.30px;top:280.76px;height:16px;line-height:16px;font:11.67px 'Liberation Mono',monospace;white-space:pre;"><b style="color:#808080;font-weight:400">&lt;</b><b style="color:#569cd6;font-weight:400">i</b><b style="color:#d4d4d4;font-weight:400"> @click="</b><b style="color:#9cdcfe;font-weight:400">removeItem</b><b style="color:#ffd700;font-weight:400">(</b><b style="color:#9cdcfe;font-weight:400">item</b><b style="color:#d4d4d4;font-weight:400">,</b><b style="color:#9cdcfe;font-weight:400">k</b><b style="color:#ffd700;font-weight:400">)</b><b style="color:#d4d4d4;font-weight:400">" </b><b style="color:#9cdcfe;font-weight:400">class</b><b style="color:#d4d4d4;font-weight:400">=</b><b style="color:#ce9178;font-weight:400">"fz-16 color-delete far fa-trash-alt"</b><b style="color:#808080;font-weight:400">&gt;&lt;/</b><b style="color:#569cd6;font-weight:400">i</b><b style="color:#808080;font-weight:400">&gt;</b></span><span style="right:670.5px;top:296.59px;height:16px;line-height:16px;font:11.67px 'Liberation Mono',monospace;color:#858585;">33</span><span style="left:128.30px;top:296.59px;height:16px;line-height:16px;font:11.67px 'Liberation Mono',monospace;white-space:pre;"><b style="color:#808080;font-weight:400">&lt;/</b><b style="color:#569cd6;font-weight:400">div</b><b style="color:#808080;font-weight:400">&gt;</b></span><span style="right:670.5px;top:312.43px;height:16px;line-height:16px;font:11.67px 'Liberation Mono',monospace;color:#858585;">34</span><span style="left:128.30px;top:312.43px;height:16px;line-height:16px;font:11.67px 'Liberation Mono',monospace;white-space:pre;"><b style="color:#6a9955;font-weight:400">&lt;!-- &lt;span @click="removeItem(item,k)" class="delete-text"&gt;xóa&lt;/span&gt; --&gt;</b></span><span style="right:670.5px;top:328.26px;height:16px;line-height:16px;font:11.67px 'Liberation Mono',monospace;color:#858585;">35</span><span style="left:114.30px;top:328.26px;height:16px;line-height:16px;font:11.67px 'Liberation Mono',monospace;white-space:pre;"><b style="color:#808080;font-weight:400">&lt;/</b><b style="color:#569cd6;font-weight:400">div</b><b style="color:#808080;font-weight:400">&gt;</b></span><span style="right:670.5px;top:344.09px;height:16px;line-height:16px;font:11.67px 'Liberation Mono',monospace;color:#858585;">36</span><span style="right:670.5px;top:359.93px;height:16px;line-height:16px;font:11.67px 'Liberation Mono',monospace;color:#858585;">37</span><span style="left:114.30px;top:359.93px;height:16px;line-height:16px;font:11.67px 'Liberation Mono',monospace;white-space:pre;"><b style="color:#808080;font-weight:400">&lt;</b><b style="color:#569cd6;font-weight:400">v-text-field</b><b style="color:#d4d4d4;font-weight:400"> </b><b style="color:#9cdcfe;font-weight:400">type</b><b style="color:#d4d4d4;font-weight:400">=</b><b style="color:#ce9178;font-weight:400">"number"</b><b style="color:#d4d4d4;font-weight:400"> </b><b style="color:#9cdcfe;font-weight:400">v-model.number</b><b style="color:#d4d4d4;font-weight:400">="</b><b style="color:#9cdcfe;font-weight:400">item.price</b><b style="color:#d4d4d4;font-weight:400">" </b><b style="color:#9cdcfe;font-weight:400">single-line dense outlined</b><b style="color:#808080;font-weight:400">&gt;&lt;/</b></span><span style="right:670.5px;top:375.76px;height:16px;line-height:16px;font:11.67px 'Liberation Mono',monospace;color:#858585;">38</span><span style="left:100.30px;top:375.76px;height:16px;line-height:16px;font:11.67px 'Liberation Mono',monospace;white-space:pre;"><b style="color:#808080;font-weight:400">&lt;/</b><b style="color:#569cd6;font-weight:400">div</b><b style="color:#808080;font-weight:400">&gt;</b></span><span style="right:670.5px;top:391.59px;height:16px;line-height:16px;font:11.67px 'Liberation Mono',monospace;color:#858585;">39</span><span style="left:86.30px;top:391.59px;height:16px;line-height:16px;font:11.67px 'Liberation Mono',monospace;white-space:pre;"><b style="color:#808080;font-weight:400">&lt;/</b><b style="color:#569cd6;font-weight:400">v-flex</b><b style="color:#808080;font-weight:400">&gt;</b></span><span style="right:670.5px;top:407.43px;height:16px;line-height:16px;font:11.67px 'Liberation Mono',monospace;color:#858585;">40</span><span style="left:86.30px;top:407.43px;height:16px;line-height:16px;font:11.67px 'Liberation Mono',monospace;white-space:pre;"><b style="color:#808080;font-weight:400">&lt;</b><b style="color:#569cd6;font-weight:400">v-dialog</b><b style="color:#d4d4d4;font-weight:400"> </b><b style="color:#9cdcfe;font-weight:400">persistent</b><b style="color:#d4d4d4;font-weight:400"> </b><b style="color:#9cdcfe;font-weight:400">:transition</b><b style="color:#d4d4d4;font-weight:400">="</b><b style="color:#569cd6;font-weight:400">false</b><b style="color:#d4d4d4;font-weight:400">" </b><b style="color:#9cdcfe;font-weight:400">v-model</b><b style="color:#d4d4d4;font-weight:400">="</b><b style="color:#9cdcfe;font-weight:400">dialog.create</b><b style="color:#d4d4d4;font-weight:400">" </b><b style="color:#9cdcfe;font-weight:400">width</b><b style="color:#d4d4d4;font-weight:400">=</b><b style="color:#ce9178;font-weight:400">"500"</b><b style="color:#808080;font-weight:400">&gt;</b></span><span style="right:670.5px;top:423.26px;height:16px;line-height:16px;font:11.67px 'Liberation Mono',monospace;color:#858585;">41</span><span style="left:100.30px;top:423.26px;height:16px;line-height:16px;font:11.67px 'Liberation Mono',monospace;white-space:pre;"><b style="color:#808080;font-weight:400">&lt;</b><b style="color:#569cd6;font-weight:400">FormCreateCost</b></span><span style="right:670.5px;top:439.09px;height:16px;line-height:16px;font:11.67px 'Liberation Mono',monospace;color:#858585;">42</span><span style="left:114.30px;top:439.09px;height:16px;line-height:16px;font:11.67px 'Liberation Mono',monospace;white-space:pre;"><b style="color:#d4d4d4;font-weight:400">@emitNewForm="</b><b style="color:#9cdcfe;font-weight:400">emitNewForm</b><b style="color:#d4d4d4;font-weight:400">"</b></span><span style="right:670.5px;top:454.92px;height:16px;line-height:16px;font:11.67px 'Liberation Mono',monospace;color:#858585;">43</span><span style="left:114.30px;top:454.92px;height:16px;line-height:16px;font:11.67px 'Liberation Mono',monospace;white-space:pre;"><b style="color:#d4d4d4;font-weight:400">@close="</b><b style="color:#9cdcfe;font-weight:400">dialog.create</b><b style="color:#d4d4d4;font-weight:400"> = </b><b style="color:#569cd6;font-weight:400">false</b><b style="color:#d4d4d4;font-weight:400">"</b></span><span style="right:670.5px;top:470.76px;height:16px;line-height:16px;font:11.67px 'Liberation Mono',monospace;color:#858585;">44</span><span style="left:114.30px;top:470.76px;height:16px;line-height:16px;font:11.67px 'Liberation Mono',monospace;white-space:pre;"><b style="color:#9cdcfe;font-weight:400">:dialog</b><b style="color:#d4d4d4;font-weight:400">="</b><b style="color:#9cdcfe;font-weight:400">dialog.create</b><b style="color:#d4d4d4;font-weight:400">"</b></span><span style="right:670.5px;top:486.59px;height:16px;line-height:16px;font:11.67px 'Liberation Mono',monospace;color:#858585;">45</span><span style="left:114.30px;top:486.59px;height:16px;line-height:16px;font:11.67px 'Liberation Mono',monospace;white-space:pre;"><b style="color:#9cdcfe;font-weight:400">:mode</b><b style="color:#d4d4d4;font-weight:400">="</b><b style="color:#ce9178;font-weight:400">'create'</b><b style="color:#d4d4d4;font-weight:400">"</b></span><span style="right:670.5px;top:502.42px;height:16px;line-height:16px;font:11.67px 'Liberation Mono',monospace;color:#858585;">46</span><span style="left:114.30px;top:502.42px;height:16px;line-height:16px;font:11.67px 'Liberation Mono',monospace;white-space:pre;"><b style="color:#9cdcfe;font-weight:400">:data</b><b style="color:#d4d4d4;font-weight:400">="</b><b style="color:#9cdcfe;font-weight:400">dataItem</b><b style="color:#d4d4d4;font-weight:400">"</b></span><span style="right:670.5px;top:518.26px;height:16px;line-height:16px;font:11.67px 'Liberation Mono',monospace;color:#858585;">47</span><span style="left:100.30px;top:518.26px;height:16px;line-height:16px;font:11.67px 'Liberation Mono',monospace;white-space:pre;"><b style="color:#808080;font-weight:400">/&gt;</b></span><span style="right:670.5px;top:534.09px;height:16px;line-height:16px;font:11.67px 'Liberation Mono',monospace;color:#858585;">48</span><span style="left:86.30px;top:534.09px;height:16px;line-height:16px;font:11.67px 'Liberation Mono',monospace;white-space:pre;"><b style="color:#808080;font-weight:400">&lt;/</b><b style="color:#569cd6;font-weight:400">v-dialog</b><b style="color:#808080;font-weight:400">&gt;</b></span><span style="right:670.5px;top:549.92px;height:16px;line-height:16px;font:11.67px 'Liberation Mono',monospace;color:#858585;">49</span><span style="left:86.30px;top:549.92px;height:16px;line-height:16px;font:11.67px 'Liberation Mono',monospace;white-space:pre;"><b style="color:#808080;font-weight:400">&lt;</b><b style="color:#569cd6;font-weight:400">v-dialog</b><b style="color:#d4d4d4;font-weight:400"> </b><b style="color:#9cdcfe;font-weight:400">persistent</b><b style="color:#d4d4d4;font-weight:400"> </b><b style="color:#9cdcfe;font-weight:400">:transition</b><b style="color:#d4d4d4;font-weight:400">="</b><b style="color:#569cd6;font-weight:400">false</b><b style="color:#d4d4d4;font-weight:400">" </b><b style="color:#9cdcfe;font-weight:400">v-model</b><b style="color:#d4d4d4;font-weight:400">="</b><b style="color:#9cdcfe;font-weight:400">dialog.edit</b><b style="color:#d4d4d4;font-weight:400">" </b><b style="color:#9cdcfe;font-weight:400">width</b><b style="color:#d4d4d4;font-weight:400">=</b><b style="color:#ce9178;font-weight:400">"500"</b><b style="color:#808080;font-weight:400">&gt;</b></span><span style="right:670.5px;top:565.75px;height:16px;line-height:16px;font:11.67px 'Liberation Mono',monospace;color:#858585;">50</span><span style="left:100.30px;top:565.75px;height:16px;line-height:16px;font:11.67px 'Liberation Mono',monospace;white-space:pre;"><b style="color:#808080;font-weight:400">&lt;</b><b style="color:#569cd6;font-weight:400">FormCreateCost</b></span><span style="right:670.5px;top:581.59px;height:16px;line-height:16px;font:11.67px 'Liberation Mono',monospace;color:#858585;">51</span><span style="left:114.30px;top:581.59px;height:16px;line-height:16px;font:11.67px 'Liberation Mono',monospace;white-space:pre;"><b style="color:#d4d4d4;font-weight:400">@emitEditForm="</b><b style="color:#9cdcfe;font-weight:400">emitEditForm</b><b style="color:#d4d4d4;font-weight:400">"</b></span><span style="right:670.5px;top:597.42px;height:16px;line-height:16px;font:11.67px 'Liberation Mono',monospace;color:#858585;">52</span><span style="left:114.30px;top:597.42px;height:16px;line-height:16px;font:11.67px 'Liberation Mono',monospace;white-space:pre;"><b style="color:#d4d4d4;font-weight:400">@close="</b><b style="color:#9cdcfe;font-weight:400">dialog.edit</b><b style="color:#d4d4d4;font-weight:400"> = </b><b style="color:#569cd6;font-weight:400">false</b><b style="color:#d4d4d4;font-weight:400">"</b></span><span style="right:670.5px;top:613.25px;height:16px;line-height:16px;font:11.67px 'Liberation Mono',monospace;color:#858585;">53</span><span style="left:114.30px;top:613.25px;height:16px;line-height:16px;font:11.67px 'Liberation Mono',monospace;white-space:pre;"><b style="color:#9cdcfe;font-weight:400">:dialog</b><b style="color:#d4d4d4;font-weight:400">="</b><b style="color:#9cdcfe;font-weight:400">dialog.edit</b><b style="color:#d4d4d4;font-weight:400">"</b></span><span style="right:670.5px;top:629.09px;height:16px;line-height:16px;font:11.67px 'Liberation Mono',monospace;color:#858585;">54</span><span style="left:114.30px;top:629.09px;height:16px;line-height:16px;font:11.67px 'Liberation Mono',monospace;white-space:pre;"><b style="color:#9cdcfe;font-weight:400">:mode</b><b style="color:#d4d4d4;font-weight:400">="</b><b style="color:#ce9178;font-weight:400">'edit'</b><b style="color:#d4d4d4;font-weight:400">"</b></span><span style="right:670.5px;top:644.92px;height:16px;line-height:16px;font:11.67px 'Liberation Mono',monospace;color:#858585;">55</span><span style="left:114.30px;top:644.92px;height:16px;line-height:16px;font:11.67px 'Liberation Mono',monospace;white-space:pre;"><b style="color:#9cdcfe;font-weight:400">:data</b><b style="color:#d4d4d4;font-weight:400">="</b><b style="color:#9cdcfe;font-weight:400">dataItem</b><b style="color:#d4d4d4;font-weight:400">"</b></span><span style="right:670.5px;top:660.75px;height:16px;line-height:16px;font:11.67px 'Liberation Mono',monospace;color:#858585;">56</span><span style="left:100.30px;top:660.75px;height:16px;line-height:16px;font:11.67px 'Liberation Mono',monospace;white-space:pre;"><b style="color:#808080;font-weight:400">/&gt;</b></span><span style="right:670.5px;top:676.59px;height:16px;line-height:16px;font:11.67px 'Liberation Mono',monospace;color:#858585;">57</span><span style="left:86.30px;top:676.59px;height:16px;line-height:16px;font:11.67px 'Liberation Mono',monospace;white-space:pre;"><b style="color:#808080;font-weight:400">&lt;/</b><b style="color:#569cd6;font-weight:400">v-dialog</b><b style="color:#808080;font-weight:400">&gt;</b></span><div style="left:85.8px;top:184.2px;width:7.5px;height:15px;border:1px solid #888;"></div><div style="left:463.8px;top:184.2px;width:7.5px;height:15px;border:1px solid #888;"></div></div>
<div style="left:1003.3px;top:127.5px;width:1px;height:686px;background:#393939;"></div>
<div style="left:1004px;top:398px;width:3.6px;height:56.4px;background:#48601a;"></div>
<div style="left:1004px;top:142px;width:5px;height:3px;background:#1b81a8;"></div>
<div style="left:1004px;top:222px;width:5px;height:3px;background:#1b81a8;"></div>
<div style="left:1004px;top:492px;width:3px;height:3px;background:#1b81a8;"></div>
<div style="left:1004px;top:576px;width:3px;height:5px;background:#587c0c;"></div>
<div style="left:1004px;top:584px;width:3px;height:4px;background:#587c0c;"></div>
<div style="left:1004px;top:597px;width:3px;height:8px;background:#587c0c;"></div>
<div style="left:1004px;top:619px;width:3px;height:4px;background:#587c0c;"></div>
<div style="left:643px;top:127.5px;width:349px;height:26px;background:#252526;box-shadow:0 2px 6px rgba(0,0,0,0.7);"></div>
<svg style="left:646.7px;top:135.3px;" width="10" height="10" viewBox="0 0 10 10"><path d="M3.5,1 L7.5,5 L3.5,9" fill="none" stroke="#c5c5c5" stroke-width="1"/></svg>
<div style="left:660px;top:131px;width:192.3px;height:20.5px;background:#3c3c3c;"></div>
<span style="top:132.50px;height:15px;line-height:15px;font-size:10.83px;color:#cccccc;font-family:'Liberation Sans',sans-serif;white-space:pre;left:663.70px;transform:scaleX(1.0300);transform-origin:left center;">formData.costs</span>
<span style="top:134.00px;height:13px;line-height:13px;font-size:9.5px;color:#9a9a9a;font-family:'Liberation Sans',sans-serif;white-space:pre;left:800.60px;transform:scaleX(0.9462);transform-origin:left center;">Aa</span>
<span style="top:134.00px;height:13px;line-height:13px;font-size:9px;color:#9a9a9a;font-family:'Liberation Sans',sans-serif;white-space:pre;left:817.40px;transform:scaleX(0.9078);transform-origin:left center;border-top:1px solid #9a9a9a;border-bottom:1px solid #9a9a9a;height:11px;line-height:10px;top:135px;">Ab</span>
<span style="top:132.50px;height:15px;line-height:15px;font-size:11px;color:#b0b0b0;font-family:'Liberation Sans',sans-serif;white-space:pre;left:837.50px;transform:scaleX(1.2255);transform-origin:left center;">.*</span>
<span style="top:134.60px;height:14px;line-height:14px;font-size:10.3px;color:#f48771;font-family:'Liberation Sans',sans-serif;white-space:pre;left:856.80px;transform:scaleX(0.9922);transform-origin:left center;">No results</span>
<svg style="left:918.5px;top:134.5px;" width="10" height="11" viewBox="0 0 10 11"><path d="M5,10 V1 M1.5,4.5 L5,1 L8.5,4.5" fill="none" stroke="#5a5a5a" stroke-width="1.1"/></svg>
<svg style="left:938px;top:134.5px;" width="10" height="11" viewBox="0 0 10 11"><path d="M5,1 V10 M1.5,6.5 L5,10 L8.5,6.5" fill="none" stroke="#5a5a5a" stroke-width="1.1"/></svg>
<svg style="left:954px;top:135px;" width="12" height="10" viewBox="0 0 12 10"><path d="M0,1.5 H12 M0,5.5 H12 M0,9.5 H7" stroke="#c5c5c5" stroke-width="1"/></svg>
<svg style="left:975.4px;top:136px;" width="8" height="8" viewBox="0 0 8 8"><path d="M1,1 L7,7 M7,1 L1,7" stroke="#d0d0d0" stroke-width="1.1"/></svg>
<div style="left:308px;top:813px;width:708px;height:249px;background:#1e1e1e;border-top:1px solid #3f3f3f;"></div>
<span style="top:821.80px;height:13px;line-height:13px;font-size:9.2px;color:#969696;font-family:'Liberation Sans',sans-serif;white-space:pre;left:324.30px;transform:scaleX(0.9204);transform-origin:left center;">PROBLEMS</span>
<div style="left:378.3px;top:820.8px;width:14.5px;height:14.5px;background:#4d4d4d;border-radius:50%;"></div>
<span style="top:821.80px;height:13px;line-height:13px;font-size:9.4px;color:#f0f0f0;font-family:'Liberation Sans',sans-serif;white-space:pre;left:385.50px;transform:translateX(-50%);">1</span>
<span style="top:821.80px;height:13px;line-height:13px;font-size:9.2px;color:#969696;font-family:'Liberation Sans',sans-serif;white-space:pre;left:409.30px;transform:scaleX(0.9396);transform-origin:left center;">OUTPUT</span>
<span style="top:821.80px;height:13px;line-height:13px;font-size:9.2px;color:#969696;font-family:'Liberation Sans',sans-serif;white-space:pre;left:461.70px;transform:scaleX(0.9170);transform-origin:left center;">DEBUG CONSOLE</span>
<span style="top:821.80px;height:13px;line-height:13px;font-size:9.2px;color:#e7e7e7;font-family:'Liberation Sans',sans-serif;white-space:pre;left:552.00px;transform:scaleX(0.9404);transform-origin:left center;">TERMINAL</span>
<div style="left:552px;top:838.5px;width:43.7px;height:1px;background:#e7e7e7;"></div>
<div style="left:724.8px;top:819.8px;width:141.8px;height:17px;background:#3c3c3c;"></div>
<span style="top:821.10px;height:15px;line-height:15px;font-size:10.83px;color:#f0f0f0;font-family:'Liberation Sans',sans-serif;white-space:pre;left:733.00px;transform:scaleX(1.0099);transform-origin:left center;">1: node</span>
<svg style="left:851.5px;top:826px;" width="9" height="6" viewBox="0 0 9 6"><path d="M0.8,0.8 L4.5,4.5 L8.2,0.8" fill="none" stroke="#c5c5c5" stroke-width="1.1"/></svg>
<svg style="left:880.5px;top:822.5px;" width="11" height="11" viewBox="0 0 11 11"><path d="M5.5,0 V11 M0,5.5 H11" stroke="#c5c5c5" stroke-width="1.1"/></svg>
<svg style="left:908px;top:822.5px;" width="12" height="11" viewBox="0 0 12 11"><g fill="none" stroke="#c5c5c5" stroke-width="1.1"><rect x="0.6" y="0.6" width="10.8" height="9.8"/><path d="M6,0.6 V10.4"/></g></svg>
<svg style="left:934.5px;top:822px;" width="11" height="12" viewBox="0 0 11 12"><g fill="none" stroke="#c5c5c5" stroke-width="1.1"><path d="M0.5,2.5 H10.5 M3.5,2.5 V0.8 H7.5 V2.5 M1.8,2.5 V11.3 H9.2 V2.5 M4.2,4.5 V9.5 M6.8,4.5 V9.5"/></g></svg>
<svg style="left:961.5px;top:825px;" width="10" height="6" viewBox="0 0 10 6"><path d="M0.8,5.2 L5,1 L9.2,5.2" fill="none" stroke="#c5c5c5" stroke-width="1.1"/></svg>
<svg style="left:989px;top:824px;" width="8" height="8" viewBox="0 0 8 8"><path d="M0.8,0.8 L7.2,7.2 M7.2,0.8 L0.8,7.2" stroke="#c5c5c5" stroke-width="1.1"/></svg>
<span style="top:865.30px;height:15px;line-height:15px;font-size:11.67px;color:#23d18b;font-family:'Liberation Mono',monospace;white-space:pre;left:324.30px;">✔</span>
<span style="top:865.00px;height:15px;line-height:15px;font-size:11.67px;color:#23d18b;font-family:'Liberation Mono',monospace;white-space:pre;left:338.30px;">Client</span>
<span style="top:880.00px;height:15px;line-height:15px;font-size:11.67px;color:#666666;font-family:'Liberation Mono',monospace;white-space:pre;left:338.30px;">Compiled successfully in 824.87ms</span>
<span style="top:910.30px;height:15px;line-height:15px;font-size:11.67px;color:#e5a00a;font-family:'Liberation Mono',monospace;white-space:pre;left:324.30px;">✔</span>
<span style="top:910.00px;height:15px;line-height:15px;font-size:11.67px;color:#e5a00a;font-family:'Liberation Mono',monospace;white-space:pre;left:338.30px;">Server</span>
<span style="top:925.00px;height:15px;line-height:15px;font-size:11.67px;color:#666666;font-family:'Liberation Mono',monospace;white-space:pre;left:338.30px;">Compiled successfully in 832.59ms</span>
<div style="left:324px;top:969.7px;width:42px;height:15px;background:#e5e510;"></div>
<span style="top:970.50px;height:15px;line-height:15px;font-size:11.67px;color:#1a1a1a;font-family:'Liberation Mono',monospace;white-space:pre;left:331.30px;">WARN</span>
<div style="left:324px;top:1014.7px;width:42px;height:15px;background:#e5e510;"></div>
<span style="top:1015.50px;height:15px;line-height:15px;font-size:11.67px;color:#1a1a1a;font-family:'Liberation Mono',monospace;white-space:pre;left:331.30px;">WARN</span>
<span style="top:970.50px;height:15px;line-height:15px;font-size:11.67px;color:#cccccc;font-family:'Liberation Mono',monospace;white-space:pre;left:373.30px;">Classic mode for store/ is deprecated and will be removed in Nuxt 3.</span>
<span style="top:970.50px;height:15px;line-height:15px;font-size:11.67px;color:#666666;font-family:'Liberation Mono',monospace;white-space:pre;left:926.30px;">00:48:03</span>
<span style="top:1015.50px;height:15px;line-height:15px;font-size:11.67px;color:#cccccc;font-family:'Liberation Mono',monospace;white-space:pre;left:373.30px;">Classic mode for store/ is deprecated and will be removed in Nuxt 3. (repeated 1 times)</span>
<div style="left:324.3px;top:1045px;width:6.7px;height:15px;border:1px solid #cccccc;"></div>
<div style="left:55px;top:1061.7px;width:960.5px;height:18.3px;background:#007acc;"></div>
<svg style="left:67px;top:1064.5px;" width="9" height="12" viewBox="0 0 9 12"><g fill="none" stroke="#fff" stroke-width="1"><circle cx="2.3" cy="2.3" r="1.5"/><circle cx="2.3" cy="9.7" r="1.5"/><circle cx="7" cy="4.5" r="1.5"/><path d="M2.3,3.8 V8.2 M7,6 C7,8 2.3,7 2.3,8.2"/></g></svg>
<span style="top:1063.30px;height:15px;line-height:15px;font-size:10.4px;color:#ffffff;font-family:'Liberation Sans',sans-serif;white-space:pre;left:81.70px;transform:scaleX(1.0052);transform-origin:left center;">master*</span>
<svg style="left:131.5px;top:1065.5px;" width="11" height="11" viewBox="0 0 11 11"><g fill="none" stroke="#fff" stroke-width="1"><path d="M1.5,5.5 A4,4 0 0,1 9,3.5 M9.5,5.5 A4,4 0 0,1 2,7.5"/><path d="M9.3,1 V3.7 H6.6 M1.7,10 V7.3 H4.4"/></g></svg>
<svg style="left:157px;top:1065.7px;" width="10" height="10" viewBox="0 0 10 10"><g fill="none" stroke="#fff" stroke-width="1"><circle cx="5" cy="5" r="4.3"/><path d="M3.2,3.2 L6.8,6.8 M6.8,3.2 L3.2,6.8"/></g></svg>
<span style="top:1063.30px;height:15px;line-height:15px;font-size:10.4px;color:#ffffff;font-family:'Liberation Sans',sans-serif;white-space:pre;left:170.00px;">0</span>
<svg style="left:178.5px;top:1065.7px;" width="10" height="10" viewBox="0 0 10 10"><g fill="none" stroke="#fff" stroke-width="1"><path d="M5,0.8 L9.5,9.2 H0.5 Z"/><path d="M5,4 V6.5 M5,7.3 V8.2"/></g></svg>
<span style="top:1063.30px;height:15px;line-height:15px;font-size:10.4px;color:#ffffff;font-family:'Liberation Sans',sans-serif;white-space:pre;left:192.50px;">1</span>
<svg style="left:211.5px;top:1065.5px;" width="11" height="11" viewBox="0 0 11 11"><g fill="none" stroke="#fff" stroke-width="1"><path d="M1.5,5.5 A4,4 0 0,1 9,3.5 M9.5,5.5 A4,4 0 0,1 2,7.5"/><path d="M9.3,1 V3.7 H6.6 M1.7,10 V7.3 H4.4"/></g></svg>
<span style="top:1063.30px;height:15px;line-height:15px;font-size:10.4px;color:#ffffff;font-family:'Liberation Sans',sans-serif;white-space:pre;left:225.00px;transform:scaleX(0.9792);transform-origin:left center;">Initializing JS/TS language features</span>
<span style="top:1063.30px;height:15px;line-height:15px;font-size:10.4px;color:#ffffff;font-family:'Liberation Sans',sans-serif;white-space:pre;left:745.00px;transform:scaleX(0.9302);transform-origin:left center;">Ln 26, Col 40</span>
<span style="top:1063.30px;height:15px;line-height:15px;font-size:10.4px;color:#ffffff;font-family:'Liberation Sans',sans-serif;white-space:pre;left:816.30px;transform:scaleX(0.8979);transform-origin:left center;">Spaces: 2</span>
<span style="top:1063.30px;height:15px;line-height:15px;font-size:10.4px;color:#ffffff;font-family:'Liberation Sans',sans-serif;white-space:pre;left:871.00px;transform:scaleX(0.9002);transform-origin:left center;">UTF-8</span>
<span style="top:1063.30px;height:15px;line-height:15px;font-size:10.4px;color:#ffffff;font-family:'Liberation Sans',sans-serif;white-space:pre;left:911.20px;transform:scaleX(0.8649);transform-origin:left center;">LF</span>
<span style="top:1063.30px;height:15px;line-height:15px;font-size:10.4px;color:#ffffff;font-family:'Liberation Sans',sans-serif;white-space:pre;left:934.80px;transform:scaleX(0.9664);transform-origin:left center;">Vue</span>
<svg style="left:965.5px;top:1065px;" width="12" height="11" viewBox="0 0 12 11"><g fill="none" stroke="#fff" stroke-width="1"><circle cx="4" cy="3" r="2"/><path d="M0.5,10 C0.5,6 7.5,6 7.5,10"/><path d="M6.5,0.7 H11.3 V5 H9 L7.6,6.4 V5"/></g></svg>
<svg style="left:991px;top:1064.8px;" width="11" height="12" viewBox="0 0 11 12"><g fill="none" stroke="#fff" stroke-width="1"><path d="M1.2,9 H9.8 L8.6,7.2 V4.8 A3.1,3.1 0 0,0 2.4,4.8 V7.2 Z"/><path d="M4.3,10.3 A1.3,1.3 0 0,0 6.7,10.3"/></g><circle cx="8.8" cy="2.6" r="2" fill="#fff"/></svg>
<div style="left:1015.5px;top:28px;width:903px;height:1050.7px;background:#dee1e6;border-radius:5px 5px 0 0;"></div>
<div style="left:1027px;top:36px;width:178px;height:34px;background:#ffffff;border-radius:7px 7px 0 0;"></div>
<svg style="left:1021px;top:64px;" width="6" height="6" viewBox="0 0 6 6"><path d="M6,0 V6 H0 A6,6 0 0,0 6,0Z" fill="#fff"/></svg>
<svg style="left:1205px;top:64px;" width="6" height="6" viewBox="0 0 6 6"><path d="M0,0 V6 H6 A6,6 0 0,1 0,0Z" fill="#fff"/></svg>
<svg style="left:1039px;top:45px;" width="16" height="15" viewBox="0 0 16 15"><g fill="none" stroke="#2b8ed6" stroke-width="1.4"><path d="M1,7 L8,1.5 L15,7"/><path d="M3,7 V14 M13,7 V14"/></g><rect x="4.8" y="8" width="6.4" height="2" fill="#2b8ed6"/><rect x="4.8" y="11" width="6.4" height="3" fill="#2b8ed6"/><rect x="6" y="11.8" width="4" height="1.2" fill="#fff"/></svg>
<span style="top:42.30px;height:21px;line-height:21px;font-size:15px;color:#3c4043;font-family:'Liberation Sans',sans-serif;white-space:pre;left:1063.20px;transform:scaleX(1.0539);transform-origin:left center;-webkit-text-stroke:0.3px #3c4043;">Motel Admin</span>
<svg style="left:1184.75px;top:48.75px;" width="8.5" height="8.5" viewBox="0 0 8.5 8.5"><path d="M0.7,0.7 L7.8,7.8 M7.8,0.7 L0.7,7.8" stroke="#3c4043" stroke-width="1.8"/></svg>
<svg style="left:1218px;top:44.5px;" width="12" height="17" viewBox="0 0 12 17"><path d="M6,0.3 A5.7,5.7 0 0,1 11.7,6 C11.7,9.5 7.5,12 6,16.7 C4.5,12 0.3,9.5 0.3,6 A5.7,5.7 0 0,1 6,0.3Z" fill="#34a853"/><path d="M6,0.3 A5.7,5.7 0 0,1 11.7,6 L6,6Z" fill="#fbbc04"/><path d="M6,0.3 A5.7,5.7 0 0,0 0.3,6 L6,6Z" fill="#ea4335"/><path d="M0.3,6 C0.3,8 1.5,9.5 3,11 L6,6Z" fill="#4285f4"/><circle cx="6" cy="6" r="2.1" fill="#fff"/></svg>
<span style="top:42.30px;height:21px;line-height:21px;font-size:15px;color:#3c4043;font-family:'Liberation Sans',sans-serif;white-space:pre;left:1240.50px;transform:scaleX(1.0049);transform-origin:left center;-webkit-text-stroke:0.3px #3c4043;-webkit-mask-image:linear-gradient(90deg,#000 72%,transparent 100%);mask-image:linear-gradient(90deg,#000 72%,transparent 100%);">24 Đường D2 đế</span>
<svg style="left:1361.75px;top:48.75px;" width="8.5" height="8.5" viewBox="0 0 8.5 8.5"><path d="M0.7,0.7 L7.8,7.8 M7.8,0.7 L0.7,7.8" stroke="#45494d" stroke-width="1.7"/></svg>
<div style="left:1381px;top:43px;width:1px;height:20px;background:#878a8e;"></div>
<svg style="left:1393px;top:45px;" width="16" height="16" viewBox="0 0 16 16"><circle cx="8" cy="8" r="8" fill="#0aa1ee"/><text x="8" y="12" font-family="Liberation Sans" font-weight="700" font-size="11" fill="#fff" text-anchor="middle">S</text></svg>
<span style="top:42.30px;height:21px;line-height:21px;font-size:15px;color:#3c4043;font-family:'Liberation Sans',sans-serif;white-space:pre;left:1417.30px;transform:scaleX(0.9472);transform-origin:left center;-webkit-text-stroke:0.3px #3c4043;">Skype</span>
<svg style="left:1537.75px;top:48.75px;" width="8.5" height="8.5" viewBox="0 0 8.5 8.5"><path d="M0.7,0.7 L7.8,7.8 M7.8,0.7 L0.7,7.8" stroke="#45494d" stroke-width="1.7"/></svg>
<div style="left:1557px;top:43px;width:1px;height:20px;background:#878a8e;"></div>
<div style="left:1569px;top:45px;width:16px;height:16px;background:#3b5998;border-radius:1.5px;"></div>
<svg style="left:1569px;top:45px;" width="16" height="16" viewBox="0 0 16 16"><path d="M11,16 V10 H13 L13.3,7.6 H11 V6.2 C11,5.5 11.3,5.1 12.2,5.1 H13.4 V3 C13,2.95 12.3,2.9 11.6,2.9 C9.8,2.9 8.6,4 8.6,5.9 V7.6 H6.6 V10 H8.6 V16 Z" fill="#fff"/></svg>
<span style="top:42.30px;height:21px;line-height:21px;font-size:15px;color:#3c4043;font-family:'Liberation Sans',sans-serif;white-space:pre;left:1593.40px;transform:scaleX(0.9761);transform-origin:left center;-webkit-text-stroke:0.3px #3c4043;">Facebook</span>
<svg style="left:1713.75px;top:48.75px;" width="8.5" height="8.5" viewBox="0 0 8.5 8.5"><path d="M0.7,0.7 L7.8,7.8 M7.8,0.7 L0.7,7.8" stroke="#45494d" stroke-width="1.7"/></svg>
<div style="left:1733px;top:43px;width:1px;height:20px;background:#878a8e;"></div>
<svg style="left:1750px;top:47px;" width="12" height="12" viewBox="0 0 12 12"><path d="M6,0 V12 M0,6 H12" stroke="#3c4043" stroke-width="2"/></svg>
<div style="left:1831px;top:52.2px;width:10.5px;height:2px;background:#3c4043;"></div>
<div style="left:1863px;top:44px;width:10px;height:10px;border:2px solid #3c4043;"></div>
<svg style="left:1895.0px;top:44.3px;" width="10" height="10" viewBox="0 0 10 10"><path d="M0.7,0.7 L9.3,9.3 M9.3,0.7 L0.7,9.3" stroke="#3c4043" stroke-width="2"/></svg>
<div style="left:1019px;top:70px;width:897.5px;height:36px;background:#ffffff;"></div>
<svg style="left:1034px;top:82px;" width="14" height="13" viewBox="0 0 14 13"><path d="M13.5,6.5 H1.5 M6.5,1 L1,6.5 L6.5,12" fill="none" stroke="#5f6368" stroke-width="1.9"/></svg>
<svg style="left:1066px;top:82px;" width="14" height="13" viewBox="0 0 14 13"><path d="M0.5,6.5 H12.5 M7.5,1 L13,6.5 L7.5,12" fill="none" stroke="#bdc1c6" stroke-width="1.9"/></svg>
<svg style="left:1097.5px;top:81px;" width="15" height="15" viewBox="0 0 15 15"><path d="M12.6,4.4 A6,6 0 1,0 13.5,8.5" fill="none" stroke="#5f6368" stroke-width="1.9"/><path d="M13.8,1 V6 H8.8 Z" fill="#5f6368"/></svg>
<div style="left:1127px;top:74.5px;width:347.5px;height:27px;background:#f1f3f4;border-radius:13.5px;"></div>
<svg style="left:1138px;top:81.5px;" width="13.5" height="13.5" viewBox="0 0 13.5 13.5"><circle cx="6.75" cy="6.75" r="5.9" fill="none" stroke="#5f6368" stroke-width="1.3"/><rect x="6.1" y="6" width="1.3" height="4" fill="#5f6368"/><rect x="6.1" y="3.5" width="1.3" height="1.4" fill="#5f6368"/></svg>
<span style="top:76.80px;height:21px;line-height:21px;font-size:15px;color:#202124;font-family:'Liberation Sans',sans-serif;white-space:pre;left:1161.40px;transform:scaleX(0.9729);transform-origin:left center;-webkit-text-stroke:0.25px #202124;">localhost</span>
<span style="top:76.80px;height:21px;line-height:21px;font-size:15px;color:#70757a;font-family:'Liberation Sans',sans-serif;white-space:pre;left:1219.00px;transform:scaleX(0.9593);transform-origin:left center;-webkit-text-stroke:0.2px #70757a;">:3000/motelArea</span>
<svg style="left:1418px;top:81px;" width="14" height="14" viewBox="0 0 14 14"><circle cx="5.8" cy="5.8" r="4.6" fill="none" stroke="#5f6368" stroke-width="1.4"/><path d="M9.2,9.2 L13.3,13.3" stroke="#5f6368" stroke-width="1.5"/><rect x="3.6" y="5.2" width="4.4" height="1.2" fill="#5f6368"/></svg>
<svg style="left:1449.5px;top:80.5px;" width="15" height="14.5" viewBox="0 0 15 14.5"><path d="M7.5,1.2 L9.4,5.5 L14,6 L10.5,9.1 L11.5,13.7 L7.5,11.3 L3.5,13.7 L4.5,9.1 L1,6 L5.6,5.5 Z" fill="none" stroke="#5f6368" stroke-width="1.3" stroke-linejoin="round"/></svg>
<svg style="left:1489px;top:79px;" width="24" height="24" viewBox="0 0 24 24"><path d="M12.5,1 L15,3.5 L12.5,6 L10,3.5 Z" fill="#222"/><path d="M10.5,4.5 L3,13.5 L2,15.5 L4,14.7 L12,6Z" fill="#3a6a55"/><rect x="9.5" y="9.5" width="12.5" height="12.5" rx="2" fill="#3b82f6"/></svg>
<svg style="left:1520.5px;top:80.5px;" width="17" height="14" viewBox="0 0 17 14"><path d="M1,13 L7,2 L11,9.5 M6.5,13 L11.5,4.5 L16,13 Z" fill="none" stroke="#26c296" stroke-width="1.5" stroke-linejoin="round"/><path d="M1,13 H6.5" stroke="#26c296" stroke-width="1.5"/></svg>
<div style="left:1553px;top:80.2px;width:16px;height:16px;background:#e4e4e4;border-radius:1px;"></div>
<svg style="left:1553px;top:80.2px;" width="16" height="16" viewBox="0 0 16 16"><g fill="none" stroke="#f6f6f6" stroke-width="0.9"><ellipse cx="8" cy="8" rx="6.5" ry="2.6"/><ellipse cx="8" cy="8" rx="6.5" ry="2.6" transform="rotate(60 8 8)"/><ellipse cx="8" cy="8" rx="6.5" ry="2.6" transform="rotate(120 8 8)"/></g><circle cx="8" cy="8" r="1.2" fill="#f6f6f6"/></svg>
<div style="left:1585px;top:80.2px;width:16px;height:16px;background:#0a6fd8;"></div>
<svg style="left:1585px;top:80.2px;" width="16" height="16" viewBox="0 0 16 16"><path d="M3,3.5 H13 M3,6 V9 L8,12.5 L13,9 V6 L8,9.3 Z" fill="none" stroke="#fff" stroke-width="1.4"/></svg>
<div style="left:1616.5px;top:80px;width:11.5px;height:13px;background:#4a85ee;border-radius:1.5px;"></div>
<div style="left:1623px;top:85px;width:10px;height:11.5px;background:#d8dade;border-radius:1px;"></div>
<span style="top:81.00px;height:11px;line-height:11px;font-size:8px;color:#fff;font-family:'Liberation Sans',sans-serif;white-space:pre;font-weight:700;left:1622.00px;transform:translateX(-50%);">G</span>
<span style="top:86.00px;height:10px;line-height:10px;font-size:7px;color:#4a6ea8;font-family:'Liberation Sans',sans-serif;white-space:pre;font-weight:700;left:1628.00px;transform:translateX(-50%);">文</span>
<svg style="left:1649px;top:80px;" width="16" height="17" viewBox="0 0 16 17"><path d="M8,0.8 L15,3 V8 C15,12 12,15 8,16.3 C4,15 1,12 1,8 V3 Z" fill="#ef5a68"/><circle cx="8" cy="8" r="3.2" fill="none" stroke="#fff" stroke-width="1.1"/><path d="M5.8,5.8 L10.2,10.2" stroke="#fff" stroke-width="1.1"/></svg>
<svg style="left:1680.5px;top:80px;" width="16.5" height="16.5" viewBox="0 0 16.5 16.5"><g fill="none" stroke="#d2d2d2" stroke-width="1.2"><circle cx="8.2" cy="8.2" r="7.3"/><circle cx="8.2" cy="8.2" r="4"/></g><circle cx="10.8" cy="5.6" r="1.5" fill="#d2d2d2"/></svg>
<div style="left:1712.5px;top:80px;width:16.5px;height:16.5px;background:#0b3a7a;border-radius:3px;"></div>
<svg style="left:1712.5px;top:80px;" width="16.5" height="16.5" viewBox="0 0 16.5 16.5"><g fill="#f5a21b"><rect x="3.5" y="8" width="1.8" height="5"/><rect x="6.5" y="4" width="1.8" height="9"/><rect x="9.5" y="6.5" width="1.8" height="6.5"/><rect x="12" y="11.5" width="2.4" height="1.5"/></g></svg>
<div style="left:1746px;top:81px;width:14px;height:13.5px;background:#050505;border-radius:3.5px;"></div>
<div style="left:1747px;top:89px;width:5.6px;height:5.6px;background:#fff;border:1px solid #050505;border-radius:50%;"></div>
<div style="left:1753.5px;top:89px;width:5.6px;height:5.6px;background:#fff;border:1px solid #050505;border-radius:50%;"></div>
<div style="left:1776.5px;top:80px;width:16.5px;height:16.5px;background:#0a9bea;border-radius:2px;"></div>
<svg style="left:1776.5px;top:80px;" width="16.5" height="16.5" viewBox="0 0 16.5 16.5"><path d="M8.2,3.5 C10,6.5 11,8 11,9.7 A2.8,2.8 0 0,1 5.4,9.7 C5.4,8 6.5,6.5 8.2,3.5Z" fill="#fff"/></svg>
<svg style="left:1808px;top:79.7px;" width="17" height="17" viewBox="0 0 17 17"><circle cx="8.5" cy="8.5" r="6.8" fill="none" stroke="#c4122f" stroke-width="2.6"/><path d="M3.8,13.2 L13.2,3.8" stroke="#c4122f" stroke-width="2.6"/></svg>
<div style="left:1839px;top:80px;width:1px;height:16px;background:#d5d7da;"></div>
<div style="left:1852.5px;top:78.7px;width:19px;height:19px;background:linear-gradient(90deg,#5d7a45 0,#7f9468 30%,#4a5a3c 48%,#1c1f24 60%,#223a6a 85%,#2c4f9a 100%);border-radius:50%;"></div>
<div style="left:1855px;top:90px;width:7px;height:5px;background:#d9ddd6;border-radius:2px;"></div>
<div style="left:1885.5px;top:79.7px;width:17px;height:17px;background:#e8261f;border-radius:50%;"></div>
<svg style="left:1885.5px;top:79.7px;" width="17" height="17" viewBox="0 0 17 17"><path d="M8.5,3.8 L13,8.6 H10.3 V12.5 H6.7 V8.6 H4 Z" fill="#fff"/></svg>
<div style="left:1019px;top:106px;width:897.5px;height:33px;background:#ffffff;"></div>
<div style="left:1019px;top:139px;width:897.5px;height:1px;background:#e4e6e9;"></div>
<div style="left:1034px;top:114.2px;width:3.2px;height:3.2px;background:#db4437;"></div>
<div style="left:1039px;top:114.2px;width:3.2px;height:3.2px;background:#db4437;"></div>
<div style="left:1044px;top:114.2px;width:3.2px;height:3.2px;background:#db4437;"></div>
<div style="left:1034px;top:119.2px;width:3.2px;height:3.2px;background:#0f9d58;"></div>
<div style="left:1039px;top:119.2px;width:3.2px;height:3.2px;background:#4285f4;"></div>
<div style="left:1044px;top:119.2px;width:3.2px;height:3.2px;background:#f4b400;"></div>
<div style="left:1034px;top:124.2px;width:3.2px;height:3.2px;background:#0f9d58;"></div>
<div style="left:1039px;top:124.2px;width:3.2px;height:3.2px;background:#f4b400;"></div>
<div style="left:1044px;top:124.2px;width:3.2px;height:3.2px;background:#f4b400;"></div>
<span style="top:110.20px;height:21px;line-height:21px;font-size:15px;color:#3c4043;font-family:'Liberation Sans',sans-serif;white-space:pre;left:1057.20px;-webkit-text-stroke:0.3px #3c4043;">Apps</span>
<svg style="left:1109px;top:113.7px;" width="14" height="14" viewBox="0 0 14 14"><circle cx="7" cy="7" r="6.6" fill="#5f6368"/><path d="M3,3.5 C5,3 6,4.5 5.5,6 C5,7.5 3.5,7 3,8.5 C2.8,9.5 4,10.5 4.5,12 A6,6 0 0,1 3,3.5Z M8,1.5 C10,2 11,3 10.5,4.5 C10,5.5 8.5,5 8,4 Z M9,7 C10.5,6.5 12,7.5 12.5,8.5 C12,10.5 10.5,12 9,12.3 C9.5,10.5 8,9 9,7Z" fill="#fff"/></svg>
<span style="top:110.20px;height:21px;line-height:21px;font-size:15px;color:#3c4043;font-family:'Liberation Sans',sans-serif;white-space:pre;left:1132.20px;transform:scaleX(0.9895);transform-origin:left center;-webkit-text-stroke:0.3px #3c4043;">Readium</span>
<svg style="left:1209px;top:113.7px;" width="14" height="14" viewBox="0 0 14 14"><circle cx="7" cy="7" r="6.6" fill="#5f6368"/><path d="M3,3.5 C5,3 6,4.5 5.5,6 C5,7.5 3.5,7 3,8.5 C2.8,9.5 4,10.5 4.5,12 A6,6 0 0,1 3,3.5Z M8,1.5 C10,2 11,3 10.5,4.5 C10,5.5 8.5,5 8,4 Z M9,7 C10.5,6.5 12,7.5 12.5,8.5 C12,10.5 10.5,12 9,12.3 C9.5,10.5 8,9 9,7Z" fill="#fff"/></svg>
<span style="top:110.20px;height:21px;line-height:21px;font-size:15px;color:#3c4043;font-family:'Liberation Sans',sans-serif;white-space:pre;left:1232.30px;-webkit-text-stroke:0.3px #3c4043;">New Tab</span>
<svg style="left:1308px;top:115.10000000000001px;" width="14.5" height="11.6" viewBox="0 0 15 12"><path d="M0,1.5 A1.5,1.5 0 0,1 1.5,0 H5.5 L7,1.6 H13.5 A1.5,1.5 0 0,1 15,3.1 V10.5 A1.5,1.5 0 0,1 13.5,12 H1.5 A1.5,1.5 0 0,1 0,10.5 Z" fill="#74777b"/></svg>
<span style="top:110.20px;height:21px;line-height:21px;font-size:15px;color:#3c4043;font-family:'Liberation Sans',sans-serif;white-space:pre;left:1331.00px;transform:scaleX(0.9867);transform-origin:left center;-webkit-text-stroke:0.3px #3c4043;">Fihe</span>
<svg style="left:1376.5px;top:115.10000000000001px;" width="14.5" height="11.6" viewBox="0 0 15 12"><path d="M0,1.5 A1.5,1.5 0 0,1 1.5,0 H5.5 L7,1.6 H13.5 A1.5,1.5 0 0,1 15,3.1 V10.5 A1.5,1.5 0 0,1 13.5,12 H1.5 A1.5,1.5 0 0,1 0,10.5 Z" fill="#74777b"/></svg>
<span style="top:110.20px;height:21px;line-height:21px;font-size:15px;color:#3c4043;font-family:'Liberation Sans',sans-serif;white-space:pre;left:1400.50px;transform:scaleX(1.1086);transform-origin:left center;-webkit-text-stroke:0.3px #3c4043;">font-ent</span>
<svg style="left:1474px;top:115.10000000000001px;" width="14.5" height="11.6" viewBox="0 0 15 12"><path d="M0,1.5 A1.5,1.5 0 0,1 1.5,0 H5.5 L7,1.6 H13.5 A1.5,1.5 0 0,1 15,3.1 V10.5 A1.5,1.5 0 0,1 13.5,12 H1.5 A1.5,1.5 0 0,1 0,10.5 Z" fill="#74777b"/></svg>
<span style="top:110.20px;height:21px;line-height:21px;font-size:15px;color:#3c4043;font-family:'Liberation Sans',sans-serif;white-space:pre;left:1497.50px;transform:scaleX(0.9884);transform-origin:left center;-webkit-text-stroke:0.3px #3c4043;">back-end</span>
<svg style="left:1576px;top:115.10000000000001px;" width="14.5" height="11.6" viewBox="0 0 15 12"><path d="M0,1.5 A1.5,1.5 0 0,1 1.5,0 H5.5 L7,1.6 H13.5 A1.5,1.5 0 0,1 15,3.1 V10.5 A1.5,1.5 0 0,1 13.5,12 H1.5 A1.5,1.5 0 0,1 0,10.5 Z" fill="#74777b"/></svg>
<span style="top:110.20px;height:21px;line-height:21px;font-size:15px;color:#3c4043;font-family:'Liberation Sans',sans-serif;white-space:pre;left:1599.00px;transform:scaleX(1.0654);transform-origin:left center;-webkit-text-stroke:0.3px #3c4043;">Tiếng anh</span>
<span style="top:109.70px;height:21px;line-height:21px;font-size:15px;color:#4a4d51;font-family:'Liberation Sans',sans-serif;white-space:pre;font-weight:700;left:1731.80px;transform:translateX(-50%) scaleX(1.0187);">»</span>
<div style="left:1746px;top:112px;width:1px;height:17px;background:#c9cccf;"></div>
<svg style="left:1758px;top:115.10000000000001px;" width="14.5" height="11.6" viewBox="0 0 15 12"><path d="M0,1.5 A1.5,1.5 0 0,1 1.5,0 H5.5 L7,1.6 H13.5 A1.5,1.5 0 0,1 15,3.1 V10.5 A1.5,1.5 0 0,1 13.5,12 H1.5 A1.5,1.5 0 0,1 0,10.5 Z" fill="#74777b"/></svg>
<span style="top:110.20px;height:21px;line-height:21px;font-size:15px;color:#3c4043;font-family:'Liberation Sans',sans-serif;white-space:pre;left:1781.40px;transform:scaleX(1.0448);transform-origin:left center;-webkit-text-stroke:0.3px #3c4043;">Other bookmarks</span>
<div style="left:1019px;top:140px;width:890px;height:762px;background:#999999;"></div>
<div style="left:1909px;top:140px;width:7.5px;height:762px;background:#ffffff;"></div>
<div style="left:1019px;top:140px;width:890px;height:47.6px;background:#0e7b61;box-shadow:0 2px 3px rgba(0,0,0,0.25);"></div>
<svg style="left:1032.5px;top:149px;" width="16" height="24" viewBox="0 0 16 24"><g fill="none" stroke="#1a62a6" stroke-width="2.1"><path d="M15,1.2 H7.5 A6,6 0 0,0 1.2,7.5 V23"/><path d="M15,5.6 H8.5 A3,3 0 0,0 5.6,8.6 V23"/><path d="M5.6,11.8 H13"/></g></svg>
<span style="top:159.60px;height:18px;line-height:18px;font-size:12.6px;color:#b08d2c;font-family:'Liberation Sans',sans-serif;white-space:pre;left:1038.00px;transform:scaleX(1.0715);transform-origin:left center;-webkit-text-stroke:0.3px #b08d2c;">Motel</span>
<span style="top:155.00px;height:19px;line-height:19px;font-size:13.5px;color:#2c4e8c;font-family:'Liberation Sans',sans-serif;white-space:pre;font-weight:700;left:1079.70px;transform:scaleX(0.9383);transform-origin:left center;text-decoration:underline;">Thống kê</span>
<span style="top:155.00px;height:19px;line-height:19px;font-size:13.5px;color:#7eaa9a;font-family:'Liberation Sans',sans-serif;white-space:pre;left:1144.00px;transform:scaleX(0.9936);transform-origin:left center;">Nhà trọ</span>
<span style="top:155.00px;height:19px;line-height:19px;font-size:13.5px;color:#7eaa9a;font-family:'Liberation Sans',sans-serif;white-space:pre;left:1196.00px;transform:scaleX(0.9907);transform-origin:left center;">Phòng trọ</span>
<span style="top:155.00px;height:19px;line-height:19px;font-size:13.5px;color:#7eaa9a;font-family:'Liberation Sans',sans-serif;white-space:pre;left:1262.20px;transform:scaleX(0.9740);transform-origin:left center;">Quản lí thu chi</span>
<svg style="left:1836px;top:156px;" width="14" height="14" viewBox="0 0 14 14"><g fill="none" stroke="#8fb5a7" stroke-width="1.3"><circle cx="7" cy="3.8" r="2.6"/><path d="M1,13 V11.5 C1,9 4,8.2 7,8.2 C10,8.2 13,9 13,11.5 V13 Z"/></g></svg>
<svg style="left:1874.5px;top:162px;" width="8" height="5" viewBox="0 0 8 5"><path d="M0,0 H8 L4,4.2Z" fill="#8fb5a7"/></svg>
<div style="left:1037px;top:178px;width:847px;height:685.5px;background:#ffffff;border-radius:3px 0 0 3px;box-shadow:0 8px 11px -5px rgba(0,0,0,.2),0 18px 28px 2px rgba(0,0,0,.14),0 7px 34px 6px rgba(0,0,0,.12);"></div>
<div style="left:1884px;top:178px;width:6.5px;height:71px;background:#a3a3a3;"></div>
<div style="left:1884px;top:178px;width:6.5px;height:10px;background:#4f8f7c;"></div>
<div style="left:1884px;top:249px;width:6.5px;height:614.5px;background:#828282;"></div>
<div style="left:1037px;top:178px;width:847px;height:30px;overflow:hidden;"><div style="left:98.59999999999991px;top:-3px;width:322.4000000000001px;height:25.5px;border:1px solid #9a9a9a;border-radius:3px;"></div><div style="left:428px;top:-3px;width:322px;height:25.5px;border:1px solid #9a9a9a;border-radius:3px;"></div></div>
<span style="top:180.80px;height:15px;line-height:15px;font-size:10.5px;color:#363636;font-family:'Liberation Sans',sans-serif;white-space:pre;left:1145.20px;">Dãy trọ Lê Văn Việt</span>
<span style="top:181.50px;height:15px;line-height:15px;font-size:10.5px;color:#363636;font-family:'Liberation Sans',sans-serif;white-space:pre;left:1474.60px;">123/3 Xã Vĩnh Lộc B, Huyện Bình Chánh, Thành phố Hồ Chí</span>
<span style="top:199.80px;height:15px;line-height:15px;font-size:10.5px;color:#363636;font-family:'Liberation Sans',sans-serif;white-space:pre;left:1474.60px;">Minh</span>
<span style="top:222.10px;height:17px;line-height:17px;font-size:12.4px;color:#222222;font-family:'Liberation Sans',sans-serif;white-space:pre;font-weight:700;left:1135.60px;transform:scaleX(0.9075);transform-origin:left center;">Số điện thoại</span>
<span style="top:222.10px;height:17px;line-height:17px;font-size:12.4px;color:#222222;font-family:'Liberation Sans',sans-serif;white-space:pre;font-weight:700;left:1465.00px;transform:scaleX(0.8922);transform-origin:left center;">Email</span>
<div style="left:1135.6px;top:243px;width:322.4000000000001px;height:25px;background:#fff;border:1px solid #9a9a9a;border-radius:3px;"></div>
<div style="left:1465px;top:243px;width:322px;height:25px;background:#fff;border:1px solid #9a9a9a;border-radius:3px;"></div>
<div style="left:1132.3px;top:288px;width:656.4px;height:36px;background:#fff;border:1px solid #9a9a9a;border-radius:3px;"></div>
<div style="left:1144px;top:294.2px;width:148px;height:23.8px;background:#e0e0e0;border-radius:12px;"></div>
<span style="top:298.10px;height:15px;line-height:15px;font-size:10.5px;color:#333;font-family:'Liberation Sans',sans-serif;white-space:pre;left:1173.20px;transform:scaleX(0.9787);transform-origin:left center;">Nguyen Thuc Huynh</span>
<div style="left:1273.7px;top:299.2px;width:11.2px;height:11.2px;background:#5c5c5c;border-radius:50%;"></div>
<svg style="left:1276.3px;top:301.8px;" width="6" height="6" viewBox="0 0 6 6"><path d="M0.7,0.7 L5.3,5.3 M5.3,0.7 L0.7,5.3" stroke="#e0e0e0" stroke-width="1.3"/></svg>
<svg style="left:1766.5px;top:303.8px;" width="8" height="4.5" viewBox="0 0 8 4.5"><path d="M0,0 H8 L4,4.3Z" fill="#5f5f5f"/></svg>
<span style="top:342.10px;height:17px;line-height:17px;font-size:12.4px;color:#222222;font-family:'Liberation Sans',sans-serif;white-space:pre;font-weight:700;left:1135.60px;transform:scaleX(0.9044);transform-origin:left center;">Ngày chốt tiền hàng tháng</span>
<span style="top:342.10px;height:17px;line-height:17px;font-size:12.4px;color:#222222;font-family:'Liberation Sans',sans-serif;white-space:pre;font-weight:700;left:1465.00px;transform:scaleX(0.9044);transform-origin:left center;">Ngày chốt tiền hàng tháng</span>
<div style="left:1135.6px;top:363px;width:322.4000000000001px;height:24px;background:#fff;border:1px solid #9a9a9a;border-radius:3px;"></div>
<span style="top:368.10px;height:15px;line-height:15px;font-size:10.5px;color:#363636;font-family:'Liberation Sans',sans-serif;white-space:pre;left:1145.20px;">Ngày 3</span>
<svg style="left:1435.7px;top:373.3px;" width="8" height="4.5" viewBox="0 0 8 4.5"><path d="M0,0 H8 L4,4.3Z" fill="#5f5f5f"/></svg>
<div style="left:1465px;top:363px;width:322px;height:24px;background:#fff;border:1px solid #9a9a9a;border-radius:3px;"></div>
<span style="top:368.10px;height:15px;line-height:15px;font-size:10.5px;color:#363636;font-family:'Liberation Sans',sans-serif;white-space:pre;left:1474.60px;">Nhà nguyên căn</span>
<svg style="left:1764.9px;top:373.3px;" width="8" height="4.5" viewBox="0 0 8 4.5"><path d="M0,0 H8 L4,4.3Z" fill="#5f5f5f"/></svg>
<span style="top:408.90px;height:17px;line-height:17px;font-size:12.4px;color:#222222;font-family:'Liberation Sans',sans-serif;white-space:pre;font-weight:700;left:1135.60px;transform:scaleX(0.8995);transform-origin:left center;">Gía 1 phòng</span>
<span style="top:411.00px;height:16px;line-height:16px;font-size:11.5px;color:#f02040;font-family:'Liberation Sans',sans-serif;white-space:pre;font-weight:700;left:1202.80px;">*</span>
<span style="top:408.90px;height:17px;line-height:17px;font-size:12.4px;color:#222222;font-family:'Liberation Sans',sans-serif;white-space:pre;font-weight:700;left:1465.00px;transform:scaleX(0.8847);transform-origin:left center;">Số người tối đa</span>
<span style="top:411.00px;height:16px;line-height:16px;font-size:11.5px;color:#f02040;font-family:'Liberation Sans',sans-serif;white-space:pre;font-weight:700;left:1549.30px;">*</span>
<div style="left:1135.6px;top:430px;width:322.4000000000001px;height:25px;background:#fff;border:1px solid #9a9a9a;border-radius:3px;"></div>
<span style="top:435.60px;height:15px;line-height:15px;font-size:10.5px;color:#363636;font-family:'Liberation Sans',sans-serif;white-space:pre;left:1145.20px;">500000</span>
<div style="left:1465px;top:430px;width:322px;height:25px;background:#fff;border:1px solid #9a9a9a;border-radius:3px;"></div>
<span style="top:435.60px;height:15px;line-height:15px;font-size:10.5px;color:#363636;font-family:'Liberation Sans',sans-serif;white-space:pre;left:1474.60px;">4</span>
<span style="top:477.10px;height:17px;line-height:17px;font-size:12.4px;color:#222222;font-family:'Liberation Sans',sans-serif;white-space:pre;font-weight:700;left:1135.60px;transform:scaleX(0.8985);transform-origin:left center;">Diện tích 1 phòng</span>
<span style="top:479.20px;height:16px;line-height:16px;font-size:11.5px;color:#f02040;font-family:'Liberation Sans',sans-serif;white-space:pre;font-weight:700;left:1231.80px;">*</span>
<div style="left:1135.6px;top:498px;width:322.4000000000001px;height:24px;background:#fff;border:1px solid #9a9a9a;border-radius:3px;"></div>
<span style="top:503.10px;height:15px;line-height:15px;font-size:10.5px;color:#363636;font-family:'Liberation Sans',sans-serif;white-space:pre;left:1145.20px;">5.5</span>
<div style="left:1132.3px;top:541.8px;width:656.4px;height:273px;background:#fff;border-radius:3px;box-shadow:0 1px 3px rgba(0,0,0,0.35),0 1px 1px rgba(0,0,0,0.14);"></div>
<div style="left:1132.3px;top:541.8px;width:656.4px;height:36px;background:#0a73d1;border-radius:3px 3px 0 0;"></div>
<span style="top:553.00px;height:13px;line-height:13px;font-size:9.6px;color:#ffffff;font-family:'Liberation Sans',sans-serif;white-space:pre;font-weight:700;left:1146.50px;transform:scaleX(0.9647);transform-origin:left center;letter-spacing:0.6px;">CHI PHÍ</span>
<span style="top:553.00px;height:13px;line-height:13px;font-size:9.6px;color:#aacdf0;font-family:'Liberation Sans',sans-serif;white-space:pre;font-weight:700;left:1211.40px;transform:scaleX(0.9071);transform-origin:left center;letter-spacing:0.6px;">CƠ SỞ VẬT CHẤT</span>
<span style="top:553.00px;height:13px;line-height:13px;font-size:9.6px;color:#aacdf0;font-family:'Liberation Sans',sans-serif;white-space:pre;font-weight:700;left:1320.40px;transform:scaleX(0.9124);transform-origin:left center;letter-spacing:0.6px;">NỘI QUY</span>
<span style="top:553.00px;height:13px;line-height:13px;font-size:9.6px;color:#aacdf0;font-family:'Liberation Sans',sans-serif;white-space:pre;font-weight:700;left:1386.80px;transform:scaleX(0.9487);transform-origin:left center;letter-spacing:0.6px;">HÌNH ẢNH NHÀ TRỌ</span>
<div style="left:1132.3px;top:576.3px;width:67.3px;height:1.6px;background:#ffffff;"></div>
<span style="top:584.00px;height:16px;line-height:16px;font-size:11.2px;color:#262626;font-family:'Liberation Sans',sans-serif;white-space:pre;font-weight:700;left:1132.70px;transform:scaleX(0.9191);transform-origin:left center;">Hãy tạo các chi phí cho nhà trọ của bạn</span>
<div style="left:1708.6px;top:585.4px;width:79px;height:26.6px;background:#f5f5f5;border-radius:3px;box-shadow:0 2px 2px -1px rgba(0,0,0,0.3),0 1px 3px rgba(0,0,0,0.22);"></div>
<span style="top:593.10px;height:13px;line-height:13px;font-size:9.3px;color:#333;font-family:'Liberation Sans',sans-serif;white-space:pre;left:1748.20px;transform:translateX(-50%) scaleX(1.0055);letter-spacing:0.7px;">Tạo chi phí</span>
<span style="top:615.90px;height:17px;line-height:17px;font-size:12.4px;color:#222222;font-family:'Liberation Sans',sans-serif;white-space:pre;font-weight:700;left:1136.50px;transform:scaleX(0.9002);transform-origin:left center;">Giá 1 KW điện</span>
<span style="top:618.00px;height:16px;line-height:16px;font-size:11.5px;color:#f02040;font-family:'Liberation Sans',sans-serif;white-space:pre;font-weight:700;left:1214.30px;">*</span>
<span style="top:615.90px;height:17px;line-height:17px;font-size:12.4px;color:#222222;font-family:'Liberation Sans',sans-serif;white-space:pre;font-weight:700;left:1465.00px;transform:scaleX(0.8798);transform-origin:left center;">Giá 1 khối nước</span>
<span style="top:618.00px;height:16px;line-height:16px;font-size:11.5px;color:#f02040;font-family:'Liberation Sans',sans-serif;white-space:pre;font-weight:700;left:1551.30px;">*</span>
<div style="left:1137px;top:637px;width:321px;height:25px;background:#fff;border:1px solid #9a9a9a;border-radius:3px;"></div>
<span style="top:642.60px;height:15px;line-height:15px;font-size:10.5px;color:#363636;font-family:'Liberation Sans',sans-serif;white-space:pre;left:1146.60px;">2000043</span>
<div style="left:1465px;top:637px;width:321px;height:25px;background:#fff;border:1px solid #9a9a9a;border-radius:3px;"></div>
<span style="top:642.60px;height:15px;line-height:15px;font-size:10.5px;color:#363636;font-family:'Liberation Sans',sans-serif;white-space:pre;left:1474.60px;">5100003</span>
<span style="top:684.10px;height:17px;line-height:17px;font-size:12.4px;color:#222222;font-family:'Liberation Sans',sans-serif;white-space:pre;font-weight:700;left:1136.50px;transform:scaleX(0.8952);transform-origin:left center;">Tiền giữ xe</span>
<span style="top:686.20px;height:16px;line-height:16px;font-size:11.5px;color:#f02040;font-family:'Liberation Sans',sans-serif;white-space:pre;font-weight:700;left:1198.30px;">*</span>
<span style="top:684.10px;height:17px;line-height:17px;font-size:12.4px;color:#222222;font-family:'Liberation Sans',sans-serif;white-space:pre;font-weight:700;left:1465.00px;transform:scaleX(0.9861);transform-origin:left center;">232</span>
<span style="top:686.20px;height:16px;line-height:16px;font-size:11.5px;color:#f02040;font-family:'Liberation Sans',sans-serif;white-space:pre;font-weight:700;left:1488.20px;">*</span>
<svg style="left:1435.8px;top:689.8px;" width="11" height="13" viewBox="0 0 11 13"><g fill="none" stroke="#ee1a30" stroke-width="1.25"><path d="M0.4,2.9 H10.6 M3.6,2.9 V0.9 H7.4 V2.9 M1.7,2.9 V12.2 H9.3 V2.9 M4.25,5 V10.2 M6.75,5 V10.2"/></g></svg>
<svg style="left:1764.2px;top:689.8px;" width="11" height="13" viewBox="0 0 11 13"><g fill="none" stroke="#ee1a30" stroke-width="1.25"><path d="M0.4,2.9 H10.6 M3.6,2.9 V0.9 H7.4 V2.9 M1.7,2.9 V12.2 H9.3 V2.9 M4.25,5 V10.2 M6.75,5 V10.2"/></g></svg>
<div style="left:1137px;top:705px;width:321px;height:24px;background:#fff;border:1px solid #9a9a9a;border-radius:3px;"></div>
<span style="top:710.10px;height:15px;line-height:15px;font-size:10.5px;color:#363636;font-family:'Liberation Sans',sans-serif;white-space:pre;left:1146.60px;">6150003</span>
<div style="left:1465px;top:705px;width:321px;height:24px;background:#fff;border:1px solid #9a9a9a;border-radius:3px;"></div>
<span style="top:710.10px;height:15px;line-height:15px;font-size:10.5px;color:#363636;font-family:'Liberation Sans',sans-serif;white-space:pre;left:1474.60px;">2323</span>
<span style="top:751.00px;height:17px;line-height:17px;font-size:12.4px;color:#222222;font-family:'Liberation Sans',sans-serif;white-space:pre;font-weight:700;left:1136.50px;transform:scaleX(0.9467);transform-origin:left center;">2323adasd</span>
<span style="top:753.10px;height:16px;line-height:16px;font-size:11.5px;color:#f02040;font-family:'Liberation Sans',sans-serif;white-space:pre;font-weight:700;left:1199.30px;">*</span>
<svg style="left:1435.8px;top:757.5px;" width="11" height="13" viewBox="0 0 11 13"><g fill="none" stroke="#ee1a30" stroke-width="1.25"><path d="M0.4,2.9 H10.6 M3.6,2.9 V0.9 H7.4 V2.9 M1.7,2.9 V12.2 H9.3 V2.9 M4.25,5 V10.2 M6.75,5 V10.2"/></g></svg>
<div style="left:1137px;top:772px;width:321px;height:25px;background:#fff;border:1px solid #9a9a9a;border-radius:3px;"></div>
<span style="top:777.60px;height:15px;line-height:15px;font-size:10.5px;color:#363636;font-family:'Liberation Sans',sans-serif;white-space:pre;left:1146.60px;">3</span>
<div style="left:1037px;top:824px;width:847px;height:1px;background:#dcdcdc;"></div>
<div style="left:1396.3px;top:831.4px;width:59.2px;height:26.6px;background:#0a73d1;border-radius:3px;box-shadow:0 2px 2px -1px rgba(0,0,0,0.3),0 1px 3px rgba(0,0,0,0.22);"></div>
<span style="top:839.10px;height:13px;line-height:13px;font-size:9.3px;color:#ffffff;font-family:'Liberation Sans',sans-serif;white-space:pre;left:1425.90px;transform:translateX(-50%);letter-spacing:0.7px;">Đồng ý</span>
<div style="left:1467px;top:831.4px;width:58.2px;height:26.6px;background:#f5f5f5;border-radius:3px;box-shadow:0 2px 2px -1px rgba(0,0,0,0.3),0 1px 3px rgba(0,0,0,0.22);"></div>
<span style="top:839.10px;height:13px;line-height:13px;font-size:9.3px;color:#333;font-family:'Liberation Sans',sans-serif;white-space:pre;left:1496.00px;transform:translateX(-50%);letter-spacing:0.7px;">Hủy bỏ</span>
<div style="left:1019px;top:902px;width:897.5px;height:125px;background:#f3f3f3;"></div>
<div style="left:1019px;top:902px;width:897.5px;height:1px;background:#cfcfcf;"></div>
<div style="left:1019px;top:926px;width:897.5px;height:1px;background:#cfcfcf;"></div>
<div style="left:1019px;top:950px;width:897.5px;height:1px;background:#d9d9d9;"></div>
<div style="left:1019px;top:1002px;width:897.5px;height:1px;background:#cfcfcf;"></div>
<svg style="left:1027.5px;top:908px;" width="13" height="13" viewBox="0 0 13 13"><g fill="none" stroke="#5a5a5a" stroke-width="1.2"><path d="M11.5,5 V1 H1 V11.5 H5"/></g><path d="M5.5,5.5 L12.5,8 L9.6,9.3 L12,12 L11,12.8 L8.6,10.2 L7.3,12.5 Z" fill="#5a5a5a"/></svg>
<svg style="left:1050px;top:907px;" width="14" height="14" viewBox="0 0 14 14"><g fill="none" stroke="#5a5a5a" stroke-width="1.2"><rect x="4.5" y="1" width="8.5" height="12"/><rect x="1" y="5.5" width="5" height="7.5" fill="#f3f3f3"/></g></svg>
<div style="left:1075px;top:907px;width:1px;height:14px;background:#cccccc;"></div>
<span style="top:906.70px;height:15px;line-height:15px;font-size:10.7px;color:#4a4a4a;font-family:'Liberation Sans',sans-serif;white-space:pre;left:1091.50px;">Elements</span>
<span style="top:906.70px;height:15px;line-height:15px;font-size:10.7px;color:#202020;font-family:'Liberation Sans',sans-serif;white-space:pre;left:1157.40px;transform:scaleX(0.9944);transform-origin:left center;">Console</span>
<span style="top:906.70px;height:15px;line-height:15px;font-size:10.7px;color:#4a4a4a;font-family:'Liberation Sans',sans-serif;white-space:pre;left:1217.00px;transform:scaleX(0.9944);transform-origin:left center;">Sources</span>
<span style="top:906.70px;height:15px;line-height:15px;font-size:10.7px;color:#4a4a4a;font-family:'Liberation Sans',sans-serif;white-space:pre;left:1277.80px;transform:scaleX(1.0254);transform-origin:left center;">Network</span>
<span style="top:906.70px;height:15px;line-height:15px;font-size:10.7px;color:#4a4a4a;font-family:'Liberation Sans',sans-serif;white-space:pre;left:1338.90px;transform:scaleX(1.0133);transform-origin:left center;">Performance</span>
<span style="top:906.70px;height:15px;line-height:15px;font-size:10.7px;color:#4a4a4a;font-family:'Liberation Sans',sans-serif;white-space:pre;left:1422.80px;transform:scaleX(1.0205);transform-origin:left center;">Memory</span>
<span style="top:906.70px;height:15px;line-height:15px;font-size:10.7px;color:#4a4a4a;font-family:'Liberation Sans',sans-serif;white-space:pre;left:1483.50px;transform:scaleX(1.0326);transform-origin:left center;">Application</span>
<span style="top:906.70px;height:15px;line-height:15px;font-size:10.7px;color:#4a4a4a;font-family:'Liberation Sans',sans-serif;white-space:pre;left:1559.30px;transform:scaleX(1.0101);transform-origin:left center;">Security</span>
<span style="top:906.70px;height:15px;line-height:15px;font-size:10.7px;color:#4a4a4a;font-family:'Liberation Sans',sans-serif;white-space:pre;left:1619.50px;transform:scaleX(1.0297);transform-origin:left center;">Audits</span>
<span style="top:906.70px;height:15px;line-height:15px;font-size:10.7px;color:#4a4a4a;font-family:'Liberation Sans',sans-serif;white-space:pre;left:1672.00px;transform:scaleX(0.9664);transform-origin:left center;">Vue</span>
<span style="top:906.70px;height:15px;line-height:15px;font-size:10.7px;color:#4a4a4a;font-family:'Liberation Sans',sans-serif;white-space:pre;left:1711.40px;transform:scaleX(0.9577);transform-origin:left center;">Redux</span>
<div style="left:1146.5px;top:925px;width:60.2px;height:1.8px;background:#1a73e8;"></div>
<div style="left:1860.5px;top:907px;width:1px;height:14px;background:#cccccc;"></div>
<div style="left:1875.3px;top:908.8px;width:2.2px;height:2.2px;background:#5a5a5a;border-radius:50%;"></div>
<div style="left:1875.3px;top:913.0px;width:2.2px;height:2.2px;background:#5a5a5a;border-radius:50%;"></div>
<div style="left:1875.3px;top:917.1999999999999px;width:2.2px;height:2.2px;background:#5a5a5a;border-radius:50%;"></div>
<svg style="left:1897.25px;top:909.55px;" width="9.5" height="9.5" viewBox="0 0 9.5 9.5"><path d="M0.7,0.7 L8.8,8.8 M8.8,0.7 L0.7,8.8" stroke="#4a4a4a" stroke-width="1.5"/></svg>
<svg style="left:1026.5px;top:932.5px;" width="13" height="12" viewBox="0 0 13 12"><rect x="0.6" y="0.6" width="11.8" height="10.8" fill="none" stroke="#5a5a5a" stroke-width="1.1"/><path d="M3.5,0.6 V11.4" stroke="#5a5a5a" stroke-width="1.1"/><path d="M6,3.3 L9.8,6 L6,8.7Z" fill="#5a5a5a"/></svg>
<div style="left:1048px;top:929px;width:21px;height:20px;background:#dedede;"></div>
<svg style="left:1052.2px;top:932.6px;" width="13" height="13" viewBox="0 0 13 13"><circle cx="6.5" cy="6.5" r="5.3" fill="none" stroke="#4a4a4a" stroke-width="1.3"/><path d="M2.8,2.8 L10.2,10.2" stroke="#4a4a4a" stroke-width="1.3"/></svg>
<div style="left:1075px;top:931px;width:1px;height:15px;background:#cccccc;"></div>
<span style="top:931.50px;height:15px;line-height:15px;font-size:10.7px;color:#4a4a4a;font-family:'Liberation Sans',sans-serif;white-space:pre;left:1083.50px;transform:scaleX(1.0498);transform-origin:left center;">top</span>
<svg style="left:1192.5px;top:936px;" width="6.5" height="5" viewBox="0 0 6.5 5"><path d="M0,0 H6.5 L3.25,4.6Z" fill="#5a5a5a"/></svg>
<div style="left:1207px;top:931px;width:1px;height:15px;background:#cccccc;"></div>
<svg style="left:1216.5px;top:933px;" width="15" height="12" viewBox="0 0 15 12"><path d="M0.6,6 C3,1.5 12,1.5 14.4,6 C12,10.5 3,10.5 0.6,6Z" fill="#5a5a5a"/><circle cx="7.5" cy="6" r="2.7" fill="#f3f3f3"/><circle cx="7.5" cy="6" r="1.5" fill="#5a5a5a"/></svg>
<div style="left:1240px;top:931px;width:1px;height:15px;background:#cccccc;"></div>
<div style="left:1247px;top:930px;width:196px;height:17.2px;background:#ffffff;"></div>
<span style="top:931.50px;height:15px;line-height:15px;font-size:10.7px;color:#8a8a8a;font-family:'Liberation Sans',sans-serif;white-space:pre;left:1251.30px;transform:scaleX(0.9516);transform-origin:left center;">Filter</span>
<span style="top:931.50px;height:15px;line-height:15px;font-size:10.7px;color:#4a4a4a;font-family:'Liberation Sans',sans-serif;white-space:pre;left:1449.80px;">Default levels</span>
<svg style="left:1519px;top:936.3px;" width="6" height="5" viewBox="0 0 6 5"><path d="M0,0 H6 L3,4.6Z" fill="#5a5a5a"/></svg>
<div style="left:1885px;top:931px;width:1px;height:15px;background:#cccccc;"></div>
<svg style="left:1895px;top:932px;" width="14" height="14" viewBox="0 0 14 14"><path d="M5.8,0.5 H8.2 L8.6,2.4 L10.1,3.1 L11.8,2.1 L13.4,4 L12.2,5.5 L12.6,7 L14,7.8 L13.3,10 L11.4,10 L10.4,11.2 L10.7,13 L8.5,13.7 L7.6,12.1 H6.4 L5.5,13.7 L3.3,13 L3.6,11.2 L2.6,10 L0.7,10 L0,7.8 L1.4,7 L1.8,5.5 L0.6,4 L2.2,2.1 L3.9,3.1 L5.4,2.4 Z" fill="#1a73e8"/><circle cx="7" cy="7" r="2.2" fill="#f3f3f3"/></svg>
<div style="left:1025.7px;top:958.3px;width:9.6px;height:9.6px;background:linear-gradient(#f6f6f6,#dcdcdc);border:1px solid #a0a0a0;border-radius:2px;"></div>
<span style="top:955.70px;height:15px;line-height:15px;font-size:10.7px;color:#4a4a4a;font-family:'Liberation Sans',sans-serif;white-space:pre;left:1042.20px;transform:scaleX(1.0212);transform-origin:left center;">Hide network</span>
<div style="left:1025.7px;top:981.5px;width:9.6px;height:9.6px;background:linear-gradient(#f6f6f6,#dcdcdc);border:1px solid #a0a0a0;border-radius:2px;"></div>
<span style="top:978.90px;height:15px;line-height:15px;font-size:10.7px;color:#4a4a4a;font-family:'Liberation Sans',sans-serif;white-space:pre;left:1042.20px;">Preserve log</span>
<div style="left:1474.5px;top:958.3px;width:9.6px;height:9.6px;background:linear-gradient(#f6f6f6,#dcdcdc);border:1px solid #a0a0a0;border-radius:2px;"></div>
<span style="top:955.70px;height:15px;line-height:15px;font-size:10.7px;color:#4a4a4a;font-family:'Liberation Sans',sans-serif;white-space:pre;left:1491.00px;transform:scaleX(1.0071);transform-origin:left center;">Log XMLHttpRequests</span>
<div style="left:1474.5px;top:981.5px;width:9.6px;height:9.6px;background:linear-gradient(#f6f6f6,#dcdcdc);border:1px solid #a0a0a0;border-radius:2px;"></div>
<svg style="left:1475.7px;top:982.7px;" width="7" height="7" viewBox="0 0 7 7"><path d="M0.8,3.6 L2.8,5.6 L6.3,1.2" fill="none" stroke="#333" stroke-width="1.4"/></svg>
<span style="top:978.90px;height:15px;line-height:15px;font-size:10.7px;color:#4a4a4a;font-family:'Liberation Sans',sans-serif;white-space:pre;left:1491.00px;transform:scaleX(0.9898);transform-origin:left center;">Eager evaluation</span>
<div style="left:1032.7px;top:1009px;width:2.2px;height:2.2px;background:#5a5a5a;border-radius:50%;"></div>
<div style="left:1032.7px;top:1013.2px;width:2.2px;height:2.2px;background:#5a5a5a;border-radius:50%;"></div>
<div style="left:1032.7px;top:1017.4px;width:2.2px;height:2.2px;background:#5a5a5a;border-radius:50%;"></div>
<span style="top:1006.80px;height:15px;line-height:15px;font-size:10.7px;color:#202020;font-family:'Liberation Sans',sans-serif;white-space:pre;left:1052.70px;transform:scaleX(0.9944);transform-origin:left center;">Console</span>
<div style="left:1044px;top:1025.2px;width:57px;height:1.8px;background:#1a73e8;"></div>
<svg style="left:1897.25px;top:1009.55px;" width="9.5" height="9.5" viewBox="0 0 9.5 9.5"><path d="M0.7,0.7 L8.8,8.8 M8.8,0.7 L0.7,8.8" stroke="#4a4a4a" stroke-width="1.5"/></svg>
<div style="left:1019px;top:1026.7px;width:897.5px;height:1.2px;background:#bdbdbd;"></div>
<div style="left:1019px;top:1027.9px;width:897.5px;height:48.4px;background:#ffffff;"></div>
<div style="left:1039.4px;top:1044px;width:16px;height:14px;background:#ffffff;border:1px solid #b9b9b9;"></div>
<div style="left:1041.4px;top:1046px;width:12px;height:10px;background:linear-gradient(135deg,#6a6a6a,#2a2a2a);border:1px solid #1a1a1a;"></div>
<span style="top:1042.70px;height:21px;line-height:21px;font-size:15px;color:#3c4043;font-family:'Liberation Sans',sans-serif;white-space:pre;left:1067.80px;transform:scaleX(1.0829);transform-origin:left center;-webkit-text-stroke:0.25px #3c4043;">443cee2a935....jpg</span>
<svg style="left:1220.5px;top:1049px;" width="10" height="7" viewBox="0 0 10 7"><path d="M1,6 L5,1.8 L9,6" fill="none" stroke="#5f6368" stroke-width="1.5"/></svg>
<div style="left:1249px;top:1034px;width:1px;height:36px;background:#d8dadd;"></div>
<div style="left:1266px;top:1044px;width:16px;height:14px;background:#ffffff;border:1px solid #b9b9b9;"></div>
<div style="left:1268px;top:1046px;width:12px;height:10px;background:linear-gradient(135deg,#6a6a6a,#2a2a2a);border:1px solid #1a1a1a;"></div>
<span style="top:1042.70px;height:21px;line-height:21px;font-size:15px;color:#3c4043;font-family:'Liberation Sans',sans-serif;white-space:pre;left:1294.80px;transform:scaleX(1.0989);transform-origin:left center;-webkit-text-stroke:0.25px #3c4043;">60557d1b00....jpg</span>
<svg style="left:1447.5px;top:1049px;" width="10" height="7" viewBox="0 0 10 7"><path d="M1,6 L5,1.8 L9,6" fill="none" stroke="#5f6368" stroke-width="1.5"/></svg>
<div style="left:1476px;top:1034px;width:1px;height:36px;background:#d8dadd;"></div>
<div style="left:1791px;top:1035.5px;width:88.7px;height:31.2px;background:#ffffff;border:1px solid #dadce0;border-radius:4px;"></div>
<span style="top:1041.20px;height:20px;line-height:20px;font-size:14.5px;color:#3c4043;font-family:'Liberation Sans',sans-serif;white-space:pre;font-weight:700;left:1835.40px;transform:translateX(-50%) scaleX(0.9774);">Show all</span>
<svg style="left:1892.7px;top:1046.5px;" width="10" height="10" viewBox="0 0 10 10"><path d="M0.7,0.7 L9.3,9.3 M9.3,0.7 L0.7,9.3" stroke="#5f6368" stroke-width="1.6"/></svg>
</body></html>
